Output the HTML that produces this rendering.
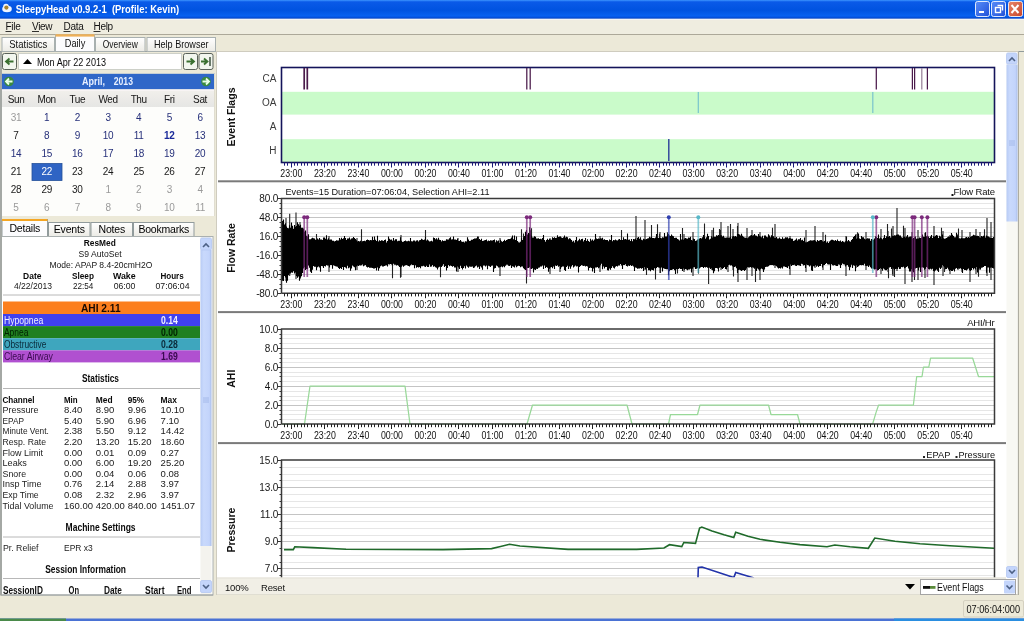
<!DOCTYPE html>
<html><head><meta charset="utf-8"><title>SleepyHead</title>
<style>html,body{margin:0;padding:0;width:1024px;height:621px;overflow:hidden;background:#ece9d8;}
svg{display:block;font-family:"Liberation Sans", sans-serif;will-change:transform;}</style></head>
<body><svg width="1024" height="621" viewBox="0 0 1024 621">
<defs>
<linearGradient id="tb" x1="0" y1="0" x2="0" y2="1"><stop offset="0" stop-color="#3d95ff"/><stop offset="0.1" stop-color="#0a5ae8"/><stop offset="0.55" stop-color="#0053e0"/><stop offset="0.85" stop-color="#0861f0"/><stop offset="1" stop-color="#0040c8"/></linearGradient>
<linearGradient id="tab" x1="0" y1="0" x2="0" y2="1"><stop offset="0" stop-color="#ffffff"/><stop offset="1" stop-color="#ecebe5"/></linearGradient>
<linearGradient id="btn" x1="0" y1="0" x2="0" y2="1"><stop offset="0" stop-color="#ffffff"/><stop offset="1" stop-color="#e3e3db"/></linearGradient>
<linearGradient id="sbv" x1="0" y1="0" x2="1" y2="0"><stop offset="0" stop-color="#b8cbf5"/><stop offset="0.3" stop-color="#c9d9fc"/><stop offset="0.8" stop-color="#c3d4fb"/><stop offset="1" stop-color="#a9bde9"/></linearGradient>
<linearGradient id="mb" x1="0" y1="0" x2="1" y2="1"><stop offset="0" stop-color="#5a8ef8"/><stop offset="1" stop-color="#1f4fd8"/></linearGradient>
<linearGradient id="cb" x1="0" y1="0" x2="1" y2="1"><stop offset="0" stop-color="#e8876a"/><stop offset="1" stop-color="#c8452a"/></linearGradient>
<linearGradient id="wk" x1="0" y1="0" x2="0" y2="1"><stop offset="0" stop-color="#f2f0ec"/><stop offset="1" stop-color="#e6e6e4"/></linearGradient>
</defs>
<rect x="0" y="0" width="1024" height="621" fill="#ece9d8" />
<rect x="0" y="0" width="1024" height="18.8" fill="url(#tb)" />
<ellipse cx="7" cy="9" rx="4.8" ry="3.3" fill="#eef4ff"/>
<circle cx="6" cy="6.5" r="2.8" fill="#eef4ff"/>
<circle cx="6.4" cy="7.6" r="2.1" fill="#a8842e"/>
<text x="15.7" y="13.36" font-size="11" font-weight="bold" fill="#ffffff" text-anchor="start" textLength="163.5" lengthAdjust="spacingAndGlyphs" xml:space="preserve">SleepyHead v0.9.2-1  (Profile: Kevin)</text>
<rect x="975.5" y="1.5" width="14" height="15" rx="2" fill="url(#mb)" stroke="#ffffff" stroke-opacity="0.85" stroke-width="1"/>
<rect x="991.5" y="1.5" width="14" height="15" rx="2" fill="url(#mb)" stroke="#ffffff" stroke-opacity="0.85" stroke-width="1"/>
<rect x="1008.5" y="1.5" width="14" height="15" rx="2" fill="url(#cb)" stroke="#ffffff" stroke-opacity="0.85" stroke-width="1"/>
<rect x="979" y="11" width="5" height="2" fill="#ffffff" />
<rect x="995.5" y="7.5" width="5" height="5" fill="none" stroke="#fff" stroke-width="1.4"/>
<path d="M997.5 5.5 H1002.5 V10.5" fill="none" stroke="#fff" stroke-width="1.4"/>
<path d="M1011.5 5 L1018.5 13 M1018.5 5 L1011.5 13" stroke="#fff" stroke-width="2"/>
<rect x="0" y="18.8" width="1024" height="1.5" fill="#f4f4f4" />
<rect x="0" y="20.3" width="1024" height="14" fill="#efede0" />
<line x1="0" y1="34.5" x2="1024" y2="34.5" stroke="#aca899" stroke-width="1" />
<text x="5.5" y="30.40" font-size="10" font-weight="normal" fill="#111" text-anchor="start" letter-spacing="-0.3" >File</text>
<text x="32" y="30.40" font-size="10" font-weight="normal" fill="#111" text-anchor="start" letter-spacing="-0.3" >View</text>
<text x="63.5" y="30.40" font-size="10" font-weight="normal" fill="#111" text-anchor="start" letter-spacing="-0.3" >Data</text>
<text x="93.5" y="30.40" font-size="10" font-weight="normal" fill="#111" text-anchor="start" letter-spacing="-0.3" >Help</text>
<line x1="5.5" y1="31.5" x2="11.5" y2="31.5" stroke="#000" stroke-width="0.8" />
<line x1="32" y1="31.5" x2="39" y2="31.5" stroke="#000" stroke-width="0.8" />
<line x1="63.5" y1="31.5" x2="70.5" y2="31.5" stroke="#000" stroke-width="0.8" />
<line x1="93.5" y1="31.5" x2="100.5" y2="31.5" stroke="#000" stroke-width="0.8" />
<line x1="0" y1="51.5" x2="1024" y2="51.5" stroke="#919b9c" stroke-width="1" />
<rect x="2" y="37.5" width="52.5" height="14" fill="url(#tab)" stroke="#a8b0b0" stroke-width="1"/>
<text x="28.25" y="48.28" font-size="10.5" font-weight="normal" fill="#111" text-anchor="middle" textLength="38" lengthAdjust="spacingAndGlyphs" >Statistics</text>
<rect x="55.5" y="34.5" width="39.0" height="17" fill="#fcfcfe" stroke="#a8b0b0" stroke-width="1"/>
<rect x="55.5" y="34.2" width="39.0" height="2.4" fill="#eeb058" />
<text x="75.0" y="47.18" font-size="10.5" font-weight="normal" fill="#111" text-anchor="middle" textLength="20.5" lengthAdjust="spacingAndGlyphs" >Daily</text>
<rect x="95.5" y="37.5" width="49.5" height="14" fill="url(#tab)" stroke="#a8b0b0" stroke-width="1"/>
<text x="120.25" y="48.28" font-size="10.5" font-weight="normal" fill="#111" text-anchor="middle" textLength="35" lengthAdjust="spacingAndGlyphs" >Overview</text>
<rect x="147" y="37.5" width="68.5" height="14" fill="url(#tab)" stroke="#a8b0b0" stroke-width="1"/>
<text x="181.25" y="48.28" font-size="10.5" font-weight="normal" fill="#111" text-anchor="middle" textLength="54.5" lengthAdjust="spacingAndGlyphs" >Help Browser</text>
<rect x="2.5" y="53.5" width="14" height="16" rx="2" fill="#f2f6ee" stroke="#5a625a" stroke-width="1"/>
<path d="M13.5 61.5 H6.5 M9.5 58.5 L6.0 61.5 L9.5 64.5" fill="none" stroke="#3a7030" stroke-width="1.8"/>
<rect x="18.5" y="53.5" width="163" height="16" fill="#ffffff" stroke="#cdd0c8" stroke-width="1"/>
<path d="M23 64 L27.5 59 L32 64 Z" fill="#000"/>
<text x="37" y="65.54" font-size="10.4" font-weight="normal" fill="#0a0a0a" text-anchor="start" textLength="69" lengthAdjust="spacingAndGlyphs" >Mon Apr 22 2013</text>
<rect x="183.5" y="53.5" width="14" height="16" rx="2" fill="#f2f6ee" stroke="#5a625a" stroke-width="1"/>
<path d="M186.5 61.5 H193.5 M190.5 58.5 L194.0 61.5 L190.5 64.5" fill="none" stroke="#3a7030" stroke-width="1.8"/>
<rect x="199.0" y="53.5" width="14" height="16" rx="2" fill="#f2f6ee" stroke="#5a625a" stroke-width="1"/>
<path d="M201.0 61.5 H207.0 M204.0 58.5 L207.5 61.5 L204.0 64.5" fill="none" stroke="#3a7030" stroke-width="1.8"/>
<rect x="209.0" y="57.0" width="2" height="9" fill="#6a7a6a" />
<rect x="2" y="73.8" width="213" height="15.7" fill="#2f67c8" />
<circle cx="9" cy="81.5" r="4.8" fill="#3a8a40"/>
<circle cx="206" cy="81.5" r="4.8" fill="#3a8a40"/>
<path d="M12.5 81.5 H6 M9 78.5 L6 81.5 L9 84.5" fill="none" stroke="#e8ffe8" stroke-width="1.8"/>
<path d="M202.5 81.5 H209 M206 78.5 L209 81.5 L206 84.5" fill="none" stroke="#e8ffe8" stroke-width="1.8"/>
<text x="82" y="85.28" font-size="10.5" font-weight="bold" fill="#e8f0ff" text-anchor="start" textLength="23" lengthAdjust="spacingAndGlyphs" >April,</text>
<text x="113.75" y="85.28" font-size="10.5" font-weight="bold" fill="#e8f0ff" text-anchor="start" textLength="19.25" lengthAdjust="spacingAndGlyphs" >2013</text>
<rect x="2" y="89.5" width="213" height="17.5" fill="url(#wk)" />
<rect x="2" y="89.5" width="213" height="1.5" fill="#f8f4f4" />
<rect x="2" y="107" width="213" height="109" fill="#fdfdfb" />
<text x="16.0" y="102.80" font-size="10" font-weight="normal" fill="#161616" text-anchor="middle" letter-spacing="-0.4" >Sun</text>
<text x="46.67" y="102.80" font-size="10" font-weight="normal" fill="#161616" text-anchor="middle" letter-spacing="-0.4" >Mon</text>
<text x="77.34" y="102.80" font-size="10" font-weight="normal" fill="#161616" text-anchor="middle" letter-spacing="-0.4" >Tue</text>
<text x="108.01" y="102.80" font-size="10" font-weight="normal" fill="#161616" text-anchor="middle" letter-spacing="-0.4" >Wed</text>
<text x="138.68" y="102.80" font-size="10" font-weight="normal" fill="#161616" text-anchor="middle" letter-spacing="-0.4" >Thu</text>
<text x="169.35000000000002" y="102.80" font-size="10" font-weight="normal" fill="#161616" text-anchor="middle" letter-spacing="-0.4" >Fri</text>
<text x="200.02" y="102.80" font-size="10" font-weight="normal" fill="#161616" text-anchor="middle" letter-spacing="-0.4" >Sat</text>
<text x="16.0" y="121.20" font-size="10" font-weight="normal" fill="#9a9a9a" text-anchor="middle" letter-spacing="-0.3" >31</text>
<text x="46.67" y="121.20" font-size="10" font-weight="normal" fill="#26307a" text-anchor="middle" letter-spacing="-0.3" >1</text>
<text x="77.34" y="121.20" font-size="10" font-weight="normal" fill="#26307a" text-anchor="middle" letter-spacing="-0.3" >2</text>
<text x="108.01" y="121.20" font-size="10" font-weight="normal" fill="#26307a" text-anchor="middle" letter-spacing="-0.3" >3</text>
<text x="138.68" y="121.20" font-size="10" font-weight="normal" fill="#26307a" text-anchor="middle" letter-spacing="-0.3" >4</text>
<text x="169.35000000000002" y="121.20" font-size="10" font-weight="normal" fill="#26307a" text-anchor="middle" letter-spacing="-0.3" >5</text>
<text x="200.02" y="121.20" font-size="10" font-weight="normal" fill="#26307a" text-anchor="middle" letter-spacing="-0.3" >6</text>
<text x="16.0" y="139.10" font-size="10" font-weight="normal" fill="#1a1a1a" text-anchor="middle" letter-spacing="-0.3" >7</text>
<text x="46.67" y="139.10" font-size="10" font-weight="normal" fill="#26307a" text-anchor="middle" letter-spacing="-0.3" >8</text>
<text x="77.34" y="139.10" font-size="10" font-weight="normal" fill="#26307a" text-anchor="middle" letter-spacing="-0.3" >9</text>
<text x="108.01" y="139.10" font-size="10" font-weight="normal" fill="#26307a" text-anchor="middle" letter-spacing="-0.3" >10</text>
<text x="138.68" y="139.10" font-size="10" font-weight="normal" fill="#26307a" text-anchor="middle" letter-spacing="-0.3" >11</text>
<text x="169.35000000000002" y="139.10" font-size="10" font-weight="bold" fill="#1a2a9a" text-anchor="middle" letter-spacing="-0.3" >12</text>
<text x="200.02" y="139.10" font-size="10" font-weight="normal" fill="#26307a" text-anchor="middle" letter-spacing="-0.3" >13</text>
<text x="16.0" y="157.00" font-size="10" font-weight="normal" fill="#26307a" text-anchor="middle" letter-spacing="-0.3" >14</text>
<text x="46.67" y="157.00" font-size="10" font-weight="normal" fill="#26307a" text-anchor="middle" letter-spacing="-0.3" >15</text>
<text x="77.34" y="157.00" font-size="10" font-weight="normal" fill="#26307a" text-anchor="middle" letter-spacing="-0.3" >16</text>
<text x="108.01" y="157.00" font-size="10" font-weight="normal" fill="#26307a" text-anchor="middle" letter-spacing="-0.3" >17</text>
<text x="138.68" y="157.00" font-size="10" font-weight="normal" fill="#26307a" text-anchor="middle" letter-spacing="-0.3" >18</text>
<text x="169.35000000000002" y="157.00" font-size="10" font-weight="normal" fill="#26307a" text-anchor="middle" letter-spacing="-0.3" >19</text>
<text x="200.02" y="157.00" font-size="10" font-weight="normal" fill="#26307a" text-anchor="middle" letter-spacing="-0.3" >20</text>
<text x="16.0" y="174.90" font-size="10" font-weight="normal" fill="#1a1a1a" text-anchor="middle" letter-spacing="-0.3" >21</text>
<rect x="32" y="163.5" width="30" height="17" fill="#2f64c4" stroke="#25509a" stroke-width="0.8" />
<text x="46.67" y="174.90" font-size="10" font-weight="normal" fill="#ffffff" text-anchor="middle" letter-spacing="-0.3" >22</text>
<text x="77.34" y="174.90" font-size="10" font-weight="normal" fill="#1a1a1a" text-anchor="middle" letter-spacing="-0.3" >23</text>
<text x="108.01" y="174.90" font-size="10" font-weight="normal" fill="#1a1a1a" text-anchor="middle" letter-spacing="-0.3" >24</text>
<text x="138.68" y="174.90" font-size="10" font-weight="normal" fill="#1a1a1a" text-anchor="middle" letter-spacing="-0.3" >25</text>
<text x="169.35000000000002" y="174.90" font-size="10" font-weight="normal" fill="#1a1a1a" text-anchor="middle" letter-spacing="-0.3" >26</text>
<text x="200.02" y="174.90" font-size="10" font-weight="normal" fill="#1a1a1a" text-anchor="middle" letter-spacing="-0.3" >27</text>
<text x="16.0" y="192.80" font-size="10" font-weight="normal" fill="#1a1a1a" text-anchor="middle" letter-spacing="-0.3" >28</text>
<text x="46.67" y="192.80" font-size="10" font-weight="normal" fill="#1a1a1a" text-anchor="middle" letter-spacing="-0.3" >29</text>
<text x="77.34" y="192.80" font-size="10" font-weight="normal" fill="#1a1a1a" text-anchor="middle" letter-spacing="-0.3" >30</text>
<text x="108.01" y="192.80" font-size="10" font-weight="normal" fill="#9a9a9a" text-anchor="middle" letter-spacing="-0.3" >1</text>
<text x="138.68" y="192.80" font-size="10" font-weight="normal" fill="#9a9a9a" text-anchor="middle" letter-spacing="-0.3" >2</text>
<text x="169.35000000000002" y="192.80" font-size="10" font-weight="normal" fill="#9a9a9a" text-anchor="middle" letter-spacing="-0.3" >3</text>
<text x="200.02" y="192.80" font-size="10" font-weight="normal" fill="#9a9a9a" text-anchor="middle" letter-spacing="-0.3" >4</text>
<text x="16.0" y="210.70" font-size="10" font-weight="normal" fill="#9a9a9a" text-anchor="middle" letter-spacing="-0.3" >5</text>
<text x="46.67" y="210.70" font-size="10" font-weight="normal" fill="#9a9a9a" text-anchor="middle" letter-spacing="-0.3" >6</text>
<text x="77.34" y="210.70" font-size="10" font-weight="normal" fill="#9a9a9a" text-anchor="middle" letter-spacing="-0.3" >7</text>
<text x="108.01" y="210.70" font-size="10" font-weight="normal" fill="#9a9a9a" text-anchor="middle" letter-spacing="-0.3" >8</text>
<text x="138.68" y="210.70" font-size="10" font-weight="normal" fill="#9a9a9a" text-anchor="middle" letter-spacing="-0.3" >9</text>
<text x="169.35000000000002" y="210.70" font-size="10" font-weight="normal" fill="#9a9a9a" text-anchor="middle" letter-spacing="-0.3" >10</text>
<text x="200.02" y="210.70" font-size="10" font-weight="normal" fill="#9a9a9a" text-anchor="middle" letter-spacing="-0.3" >11</text>
<line x1="214.5" y1="74" x2="214.5" y2="216" stroke="#e0ddd0" stroke-width="1" />
<line x1="2" y1="236.5" x2="213" y2="236.5" stroke="#919b9c" stroke-width="1" />
<rect x="2" y="219.5" width="45.5" height="17.5" fill="#fcfcfe" stroke="#919b9c" stroke-width="1"/>
<rect x="2" y="219" width="45.5" height="2" fill="#f5a623" />
<rect x="2.5" y="236" width="44.5" height="1.5" fill="#fcfcfe" />
<text x="24.75" y="232.28" font-size="10.5" font-weight="normal" fill="#000" text-anchor="middle" letter-spacing="-0.2" >Details</text>
<rect x="48.5" y="222.5" width="41.5" height="14" fill="url(#tab)" stroke="#919b9c" stroke-width="1"/>
<text x="69.25" y="233.28" font-size="10.5" font-weight="normal" fill="#000" text-anchor="middle" letter-spacing="-0.2" >Events</text>
<rect x="91" y="222.5" width="41.5" height="14" fill="url(#tab)" stroke="#919b9c" stroke-width="1"/>
<text x="111.75" y="233.28" font-size="10.5" font-weight="normal" fill="#000" text-anchor="middle" letter-spacing="-0.2" >Notes</text>
<rect x="133.5" y="222.5" width="60.5" height="14" fill="url(#tab)" stroke="#919b9c" stroke-width="1"/>
<text x="163.75" y="233.28" font-size="10.5" font-weight="normal" fill="#000" text-anchor="middle" letter-spacing="-0.2" >Bookmarks</text>
<rect x="1.5" y="236.5" width="211.5" height="358.5" fill="#ffffff" stroke="#aab0b0" stroke-width="1"/>
<rect x="200.5" y="237" width="11" height="357" fill="#f4f3ee" />
<rect x="200.5" y="250" width="11" height="296" fill="url(#sbv)" />
<line x1="203" y1="398" x2="209" y2="398" stroke="#9db3e6" stroke-width="0.8" />
<line x1="203" y1="400" x2="209" y2="400" stroke="#9db3e6" stroke-width="0.8" />
<line x1="203" y1="402" x2="209" y2="402" stroke="#9db3e6" stroke-width="0.8" />
<rect x="200.5" y="238" width="11" height="12" rx="1.5" fill="#c4d5fb" stroke="#b5c8f2" stroke-width="0.8"/>
<rect x="200.5" y="580.5" width="11" height="12" rx="1.5" fill="#c4d5fb" stroke="#b5c8f2" stroke-width="0.8"/>
<path d="M203 247 L206 244 L209 247" fill="none" stroke="#4d6185" stroke-width="1.6"/>
<path d="M203 585 L206 588 L209 585" fill="none" stroke="#4d6185" stroke-width="1.6"/>
<text x="83.8" y="246.46" font-size="9.6" font-weight="bold" fill="#0a0a0a" text-anchor="start" textLength="32" lengthAdjust="spacingAndGlyphs" >ResMed</text>
<text x="78.6" y="257.18" font-size="9.4" font-weight="normal" fill="#161616" text-anchor="start" textLength="43" lengthAdjust="spacingAndGlyphs" >S9 AutoSet</text>
<text x="49.4" y="267.98" font-size="9.4" font-weight="normal" fill="#161616" text-anchor="start" textLength="103" lengthAdjust="spacingAndGlyphs" >Mode: APAP 8.4-20cmH2O</text>
<text x="23.1" y="278.66" font-size="9.6" font-weight="bold" fill="#0a0a0a" text-anchor="start" textLength="18.3" lengthAdjust="spacingAndGlyphs" >Date</text>
<text x="14" y="288.88" font-size="9.4" font-weight="normal" fill="#161616" text-anchor="start" textLength="38" lengthAdjust="spacingAndGlyphs" >4/22/2013</text>
<text x="72" y="278.66" font-size="9.6" font-weight="bold" fill="#0a0a0a" text-anchor="start" textLength="22" lengthAdjust="spacingAndGlyphs" >Sleep</text>
<text x="73" y="288.88" font-size="9.4" font-weight="normal" fill="#161616" text-anchor="start" textLength="20.4" lengthAdjust="spacingAndGlyphs" >22:54</text>
<text x="112.9" y="278.66" font-size="9.6" font-weight="bold" fill="#0a0a0a" text-anchor="start" textLength="22.8" lengthAdjust="spacingAndGlyphs" >Wake</text>
<text x="113.7" y="288.88" font-size="9.4" font-weight="normal" fill="#161616" text-anchor="start" textLength="21.7" lengthAdjust="spacingAndGlyphs" >06:00</text>
<text x="160.4" y="278.66" font-size="9.6" font-weight="bold" fill="#0a0a0a" text-anchor="start" textLength="23.3" lengthAdjust="spacingAndGlyphs" >Hours</text>
<text x="155.5" y="288.88" font-size="9.4" font-weight="normal" fill="#161616" text-anchor="start" textLength="34" lengthAdjust="spacingAndGlyphs" >07:06:04</text>
<line x1="3" y1="295" x2="200" y2="295" stroke="#b8b8b8" stroke-width="1" />
<rect x="3" y="301.5" width="197" height="12.5" fill="#fc7f1e" />
<text x="81" y="311.66" font-size="11" font-weight="bold" fill="#1a0a00" text-anchor="start" textLength="39.6" lengthAdjust="spacingAndGlyphs" >AHI 2.11</text>
<rect x="3" y="314" width="197" height="12.1" fill="#4040ee" />
<text x="3.9" y="323.60" font-size="10" font-weight="normal" fill="#f0f0ff" text-anchor="start" textLength="39.4" lengthAdjust="spacingAndGlyphs" >Hypopnea</text>
<text x="161" y="323.60" font-size="10" font-weight="bold" fill="#f0f0ff" text-anchor="start" textLength="16.8" lengthAdjust="spacingAndGlyphs" >0.14</text>
<rect x="3" y="326.1" width="197" height="12.1" fill="#208020" />
<text x="3.9" y="335.70" font-size="10" font-weight="normal" fill="#002000" text-anchor="start" textLength="24.5" lengthAdjust="spacingAndGlyphs" >Apnea</text>
<text x="161" y="335.70" font-size="10" font-weight="bold" fill="#002000" text-anchor="start" textLength="16.8" lengthAdjust="spacingAndGlyphs" >0.00</text>
<rect x="3" y="338.20000000000005" width="197" height="12.1" fill="#3ea6be" />
<text x="3.9" y="347.80" font-size="10" font-weight="normal" fill="#0a2a3a" text-anchor="start" textLength="42.5" lengthAdjust="spacingAndGlyphs" >Obstructive</text>
<text x="161" y="347.80" font-size="10" font-weight="bold" fill="#0a2a3a" text-anchor="start" textLength="16.8" lengthAdjust="spacingAndGlyphs" >0.28</text>
<rect x="3" y="350.30000000000007" width="197" height="12.1" fill="#b050d0" />
<text x="3.9" y="359.90" font-size="10" font-weight="normal" fill="#3a0a50" text-anchor="start" textLength="49" lengthAdjust="spacingAndGlyphs" >Clear Airway</text>
<text x="161" y="359.90" font-size="10" font-weight="bold" fill="#3a0a50" text-anchor="start" textLength="16.8" lengthAdjust="spacingAndGlyphs" >1.69</text>
<text x="82" y="382.20" font-size="10" font-weight="bold" fill="#0a0a0a" text-anchor="start" textLength="37" lengthAdjust="spacingAndGlyphs" >Statistics</text>
<line x1="3" y1="388.5" x2="200" y2="388.5" stroke="#b8b8b8" stroke-width="1" />
<text x="2.5" y="402.72" font-size="9.5" font-weight="bold" fill="#0a0a0a" text-anchor="start" textLength="32" lengthAdjust="spacingAndGlyphs" >Channel</text>
<text x="63.9" y="402.72" font-size="9.5" font-weight="bold" fill="#0a0a0a" text-anchor="start" textLength="13.6" lengthAdjust="spacingAndGlyphs" >Min</text>
<text x="95.8" y="402.72" font-size="9.5" font-weight="bold" fill="#0a0a0a" text-anchor="start" textLength="16.8" lengthAdjust="spacingAndGlyphs" >Med</text>
<text x="127.7" y="402.72" font-size="9.5" font-weight="bold" fill="#0a0a0a" text-anchor="start" textLength="16.4" lengthAdjust="spacingAndGlyphs" >95%</text>
<text x="160.6" y="402.72" font-size="9.5" font-weight="bold" fill="#0a0a0a" text-anchor="start" textLength="16.4" lengthAdjust="spacingAndGlyphs" >Max</text>
<text x="2.5" y="413.31" font-size="9.5" font-weight="normal" fill="#1c1c1c" text-anchor="start" textLength="36" lengthAdjust="spacingAndGlyphs" >Pressure</text>
<text x="63.9" y="413.31" font-size="9.5" font-weight="normal" fill="#202020" text-anchor="start" >8.40</text>
<text x="95.8" y="413.31" font-size="9.5" font-weight="normal" fill="#202020" text-anchor="start" >8.90</text>
<text x="127.7" y="413.31" font-size="9.5" font-weight="normal" fill="#202020" text-anchor="start" >9.96</text>
<text x="160.6" y="413.31" font-size="9.5" font-weight="normal" fill="#202020" text-anchor="start" >10.10</text>
<text x="2.5" y="423.90" font-size="9.5" font-weight="normal" fill="#1c1c1c" text-anchor="start" textLength="21.5" lengthAdjust="spacingAndGlyphs" >EPAP</text>
<text x="63.9" y="423.90" font-size="9.5" font-weight="normal" fill="#202020" text-anchor="start" >5.40</text>
<text x="95.8" y="423.90" font-size="9.5" font-weight="normal" fill="#202020" text-anchor="start" >5.90</text>
<text x="127.7" y="423.90" font-size="9.5" font-weight="normal" fill="#202020" text-anchor="start" >6.96</text>
<text x="160.6" y="423.90" font-size="9.5" font-weight="normal" fill="#202020" text-anchor="start" >7.10</text>
<text x="2.5" y="434.49" font-size="9.5" font-weight="normal" fill="#1c1c1c" text-anchor="start" textLength="46.4" lengthAdjust="spacingAndGlyphs" >Minute Vent.</text>
<text x="63.9" y="434.49" font-size="9.5" font-weight="normal" fill="#202020" text-anchor="start" >2.38</text>
<text x="95.8" y="434.49" font-size="9.5" font-weight="normal" fill="#202020" text-anchor="start" >5.50</text>
<text x="127.7" y="434.49" font-size="9.5" font-weight="normal" fill="#202020" text-anchor="start" >9.12</text>
<text x="160.6" y="434.49" font-size="9.5" font-weight="normal" fill="#202020" text-anchor="start" >14.42</text>
<text x="2.5" y="445.08" font-size="9.5" font-weight="normal" fill="#1c1c1c" text-anchor="start" textLength="43.5" lengthAdjust="spacingAndGlyphs" >Resp. Rate</text>
<text x="63.9" y="445.08" font-size="9.5" font-weight="normal" fill="#202020" text-anchor="start" >2.20</text>
<text x="95.8" y="445.08" font-size="9.5" font-weight="normal" fill="#202020" text-anchor="start" >13.20</text>
<text x="127.7" y="445.08" font-size="9.5" font-weight="normal" fill="#202020" text-anchor="start" >15.20</text>
<text x="160.6" y="445.08" font-size="9.5" font-weight="normal" fill="#202020" text-anchor="start" >18.60</text>
<text x="2.5" y="455.67" font-size="9.5" font-weight="normal" fill="#1c1c1c" text-anchor="start" textLength="40.4" lengthAdjust="spacingAndGlyphs" >Flow Limit</text>
<text x="63.9" y="455.67" font-size="9.5" font-weight="normal" fill="#202020" text-anchor="start" >0.00</text>
<text x="95.8" y="455.67" font-size="9.5" font-weight="normal" fill="#202020" text-anchor="start" >0.01</text>
<text x="127.7" y="455.67" font-size="9.5" font-weight="normal" fill="#202020" text-anchor="start" >0.09</text>
<text x="160.6" y="455.67" font-size="9.5" font-weight="normal" fill="#202020" text-anchor="start" >0.27</text>
<text x="2.5" y="466.26" font-size="9.5" font-weight="normal" fill="#1c1c1c" text-anchor="start" textLength="24.3" lengthAdjust="spacingAndGlyphs" >Leaks</text>
<text x="63.9" y="466.26" font-size="9.5" font-weight="normal" fill="#202020" text-anchor="start" >0.00</text>
<text x="95.8" y="466.26" font-size="9.5" font-weight="normal" fill="#202020" text-anchor="start" >6.00</text>
<text x="127.7" y="466.26" font-size="9.5" font-weight="normal" fill="#202020" text-anchor="start" >19.20</text>
<text x="160.6" y="466.26" font-size="9.5" font-weight="normal" fill="#202020" text-anchor="start" >25.20</text>
<text x="2.5" y="476.85" font-size="9.5" font-weight="normal" fill="#1c1c1c" text-anchor="start" textLength="23.6" lengthAdjust="spacingAndGlyphs" >Snore</text>
<text x="63.9" y="476.85" font-size="9.5" font-weight="normal" fill="#202020" text-anchor="start" >0.00</text>
<text x="95.8" y="476.85" font-size="9.5" font-weight="normal" fill="#202020" text-anchor="start" >0.04</text>
<text x="127.7" y="476.85" font-size="9.5" font-weight="normal" fill="#202020" text-anchor="start" >0.06</text>
<text x="160.6" y="476.85" font-size="9.5" font-weight="normal" fill="#202020" text-anchor="start" >0.08</text>
<text x="2.5" y="487.44" font-size="9.5" font-weight="normal" fill="#1c1c1c" text-anchor="start" textLength="39" lengthAdjust="spacingAndGlyphs" >Insp Time</text>
<text x="63.9" y="487.44" font-size="9.5" font-weight="normal" fill="#202020" text-anchor="start" >0.76</text>
<text x="95.8" y="487.44" font-size="9.5" font-weight="normal" fill="#202020" text-anchor="start" >2.14</text>
<text x="127.7" y="487.44" font-size="9.5" font-weight="normal" fill="#202020" text-anchor="start" >2.88</text>
<text x="160.6" y="487.44" font-size="9.5" font-weight="normal" fill="#202020" text-anchor="start" >3.97</text>
<text x="2.5" y="498.03" font-size="9.5" font-weight="normal" fill="#1c1c1c" text-anchor="start" textLength="36.2" lengthAdjust="spacingAndGlyphs" >Exp Time</text>
<text x="63.9" y="498.03" font-size="9.5" font-weight="normal" fill="#202020" text-anchor="start" >0.08</text>
<text x="95.8" y="498.03" font-size="9.5" font-weight="normal" fill="#202020" text-anchor="start" >2.32</text>
<text x="127.7" y="498.03" font-size="9.5" font-weight="normal" fill="#202020" text-anchor="start" >2.96</text>
<text x="160.6" y="498.03" font-size="9.5" font-weight="normal" fill="#202020" text-anchor="start" >3.97</text>
<text x="2.5" y="508.62" font-size="9.5" font-weight="normal" fill="#1c1c1c" text-anchor="start" textLength="51" lengthAdjust="spacingAndGlyphs" >Tidal Volume</text>
<text x="63.9" y="508.62" font-size="9.5" font-weight="normal" fill="#202020" text-anchor="start" >160.00</text>
<text x="95.8" y="508.62" font-size="9.5" font-weight="normal" fill="#202020" text-anchor="start" >420.00</text>
<text x="127.7" y="508.62" font-size="9.5" font-weight="normal" fill="#202020" text-anchor="start" >840.00</text>
<text x="160.6" y="508.62" font-size="9.5" font-weight="normal" fill="#202020" text-anchor="start" >1451.07</text>
<text x="65.6" y="530.50" font-size="10" font-weight="bold" fill="#0a0a0a" text-anchor="start" textLength="70" lengthAdjust="spacingAndGlyphs" >Machine Settings</text>
<line x1="3" y1="537" x2="200" y2="537" stroke="#b8b8b8" stroke-width="1" />
<text x="2.9" y="551.42" font-size="9.5" font-weight="normal" fill="#1c1c1c" text-anchor="start" textLength="35.6" lengthAdjust="spacingAndGlyphs" >Pr. Relief</text>
<text x="64" y="551.42" font-size="9.5" font-weight="normal" fill="#1c1c1c" text-anchor="start" textLength="28.7" lengthAdjust="spacingAndGlyphs" >EPR x3</text>
<text x="45.2" y="572.60" font-size="10" font-weight="bold" fill="#0a0a0a" text-anchor="start" textLength="80.8" lengthAdjust="spacingAndGlyphs" >Session Information</text>
<line x1="3" y1="578.5" x2="200" y2="578.5" stroke="#b8b8b8" stroke-width="1" />
<text x="2.9" y="593.80" font-size="10" font-weight="bold" fill="#111" text-anchor="start" textLength="40" lengthAdjust="spacingAndGlyphs" >SessionID</text>
<text x="68.5" y="593.80" font-size="10" font-weight="bold" fill="#111" text-anchor="start" textLength="10.5" lengthAdjust="spacingAndGlyphs" >On</text>
<text x="104" y="593.80" font-size="10" font-weight="bold" fill="#111" text-anchor="start" textLength="18" lengthAdjust="spacingAndGlyphs" >Date</text>
<text x="145" y="593.80" font-size="10" font-weight="bold" fill="#111" text-anchor="start" textLength="19.5" lengthAdjust="spacingAndGlyphs" >Start</text>
<text x="177" y="593.80" font-size="10" font-weight="bold" fill="#111" text-anchor="start" textLength="14.5" lengthAdjust="spacingAndGlyphs" >End</text>
<line x1="1.5" y1="595" x2="213" y2="595" stroke="#9aa0a0" stroke-width="1" />
<rect x="0" y="52" width="2" height="543.5" fill="#a4a8a4" />
<rect x="216.5" y="51.5" width="801.5" height="543" fill="#ffffff" stroke="#cfccbf" stroke-width="1"/>
<rect x="1006.5" y="52.5" width="11" height="524" fill="#f8f8f3" />
<rect x="1006.5" y="64.5" width="11" height="157" fill="url(#sbv)" />
<line x1="1009" y1="141" x2="1015" y2="141" stroke="#9db3e6" stroke-width="0.8" />
<line x1="1009" y1="143" x2="1015" y2="143" stroke="#9db3e6" stroke-width="0.8" />
<line x1="1009" y1="145" x2="1015" y2="145" stroke="#9db3e6" stroke-width="0.8" />
<rect x="1006.5" y="53" width="10.5" height="11" rx="1.5" fill="#c4d5fb" stroke="#b5c8f2" stroke-width="0.8"/>
<rect x="1006.5" y="566.5" width="10.5" height="11" rx="1.5" fill="#c4d5fb" stroke="#b5c8f2" stroke-width="0.8"/>
<path d="M1009 61 L1012 58 L1015 61" fill="none" stroke="#4d6185" stroke-width="1.6"/>
<path d="M1009 570 L1012 573 L1015 570" fill="none" stroke="#4d6185" stroke-width="1.6"/>
<rect x="281.5" y="67.5" width="713.0" height="95" fill="#ffffff" />
<rect x="281.5" y="91.8" width="713.0" height="22.8" fill="#cafbca" />
<rect x="281.5" y="139.2" width="713.0" height="23.3" fill="#cafbca" />
<rect x="281.5" y="67.5" width="713.0" height="95" fill="none" stroke="#14145a" stroke-width="1.6"/>
<text x="276.5" y="81.60" font-size="10" font-weight="normal" fill="#3a3a3a" text-anchor="end" >CA</text>
<text x="276.5" y="105.60" font-size="10" font-weight="normal" fill="#3a3a3a" text-anchor="end" >OA</text>
<text x="276.5" y="129.60" font-size="10" font-weight="normal" fill="#3a3a3a" text-anchor="end" >A</text>
<text x="276.5" y="153.60" font-size="10" font-weight="normal" fill="#3a3a3a" text-anchor="end" >H</text>
<text x="231.5" y="117" font-size="10.5" font-weight="bold" fill="#111" text-anchor="middle" transform="rotate(-90 231.5 117)" dy="3.8">Event Flags</text>
<line x1="304.2" y1="68" x2="304.2" y2="89.5" stroke="#4a1a4a" stroke-width="1.7" />
<line x1="307.3" y1="68" x2="307.3" y2="89.5" stroke="#4a1a4a" stroke-width="1.7" />
<line x1="526.8" y1="68" x2="526.8" y2="89.5" stroke="#4a1a4a" stroke-width="1.25" />
<line x1="530.2" y1="68" x2="530.2" y2="89.5" stroke="#4a1a4a" stroke-width="1.25" />
<line x1="876.3" y1="68" x2="876.3" y2="89.5" stroke="#4a1a4a" stroke-width="1.25" />
<line x1="912.4" y1="68" x2="912.4" y2="89.5" stroke="#4a1a4a" stroke-width="1.25" />
<line x1="914.6" y1="68" x2="914.6" y2="89.5" stroke="#4a1a4a" stroke-width="1.25" />
<line x1="921.8" y1="68" x2="921.8" y2="89.5" stroke="#9a829a" stroke-width="1.25" />
<line x1="927.4" y1="68" x2="927.4" y2="89.5" stroke="#4a1a4a" stroke-width="1.25" />
<line x1="698.3" y1="92" x2="698.3" y2="113" stroke="#78c4cc" stroke-width="1.2" />
<line x1="872.8" y1="92" x2="872.8" y2="113" stroke="#78c4cc" stroke-width="1.2" />
<line x1="668.8" y1="139" x2="668.8" y2="161" stroke="#2b3d9a" stroke-width="1.4" />
<path d="M284.5 162.5 v3.2 M287.5 162.5 v3.2 M291.5 162.5 v5 M294.5 162.5 v3.2 M297.5 162.5 v3.2 M301.5 162.5 v3.2 M304.5 162.5 v3.2 M307.5 162.5 v3.2 M311.5 162.5 v3.2 M314.5 162.5 v3.2 M317.5 162.5 v3.2 M321.5 162.5 v3.2 M324.5 162.5 v5 M327.5 162.5 v3.2 M331.5 162.5 v3.2 M334.5 162.5 v3.2 M337.5 162.5 v3.2 M341.5 162.5 v3.2 M344.5 162.5 v3.2 M348.5 162.5 v3.2 M351.5 162.5 v3.2 M354.5 162.5 v3.2 M358.5 162.5 v5 M361.5 162.5 v3.2 M364.5 162.5 v3.2 M368.5 162.5 v3.2 M371.5 162.5 v3.2 M374.5 162.5 v3.2 M378.5 162.5 v3.2 M381.5 162.5 v3.2 M384.5 162.5 v3.2 M388.5 162.5 v3.2 M391.5 162.5 v5 M394.5 162.5 v3.2 M398.5 162.5 v3.2 M401.5 162.5 v3.2 M405.5 162.5 v3.2 M408.5 162.5 v3.2 M411.5 162.5 v3.2 M415.5 162.5 v3.2 M418.5 162.5 v3.2 M421.5 162.5 v3.2 M425.5 162.5 v5 M428.5 162.5 v3.2 M431.5 162.5 v3.2 M435.5 162.5 v3.2 M438.5 162.5 v3.2 M441.5 162.5 v3.2 M445.5 162.5 v3.2 M448.5 162.5 v3.2 M451.5 162.5 v3.2 M455.5 162.5 v3.2 M458.5 162.5 v5 M462.5 162.5 v3.2 M465.5 162.5 v3.2 M468.5 162.5 v3.2 M472.5 162.5 v3.2 M475.5 162.5 v3.2 M478.5 162.5 v3.2 M482.5 162.5 v3.2 M485.5 162.5 v3.2 M488.5 162.5 v3.2 M492.5 162.5 v5 M495.5 162.5 v3.2 M498.5 162.5 v3.2 M502.5 162.5 v3.2 M505.5 162.5 v3.2 M508.5 162.5 v3.2 M512.5 162.5 v3.2 M515.5 162.5 v3.2 M519.5 162.5 v3.2 M522.5 162.5 v3.2 M525.5 162.5 v5 M529.5 162.5 v3.2 M532.5 162.5 v3.2 M535.5 162.5 v3.2 M539.5 162.5 v3.2 M542.5 162.5 v3.2 M545.5 162.5 v3.2 M549.5 162.5 v3.2 M552.5 162.5 v3.2 M555.5 162.5 v3.2 M559.5 162.5 v5 M562.5 162.5 v3.2 M565.5 162.5 v3.2 M569.5 162.5 v3.2 M572.5 162.5 v3.2 M575.5 162.5 v3.2 M579.5 162.5 v3.2 M582.5 162.5 v3.2 M586.5 162.5 v3.2 M589.5 162.5 v3.2 M592.5 162.5 v5 M596.5 162.5 v3.2 M599.5 162.5 v3.2 M602.5 162.5 v3.2 M606.5 162.5 v3.2 M609.5 162.5 v3.2 M612.5 162.5 v3.2 M616.5 162.5 v3.2 M619.5 162.5 v3.2 M622.5 162.5 v3.2 M626.5 162.5 v5 M629.5 162.5 v3.2 M632.5 162.5 v3.2 M636.5 162.5 v3.2 M639.5 162.5 v3.2 M643.5 162.5 v3.2 M646.5 162.5 v3.2 M649.5 162.5 v3.2 M653.5 162.5 v3.2 M656.5 162.5 v3.2 M659.5 162.5 v5 M663.5 162.5 v3.2 M666.5 162.5 v3.2 M669.5 162.5 v3.2 M673.5 162.5 v3.2 M676.5 162.5 v3.2 M679.5 162.5 v3.2 M683.5 162.5 v3.2 M686.5 162.5 v3.2 M689.5 162.5 v3.2 M693.5 162.5 v5 M696.5 162.5 v3.2 M700.5 162.5 v3.2 M703.5 162.5 v3.2 M706.5 162.5 v3.2 M710.5 162.5 v3.2 M713.5 162.5 v3.2 M716.5 162.5 v3.2 M720.5 162.5 v3.2 M723.5 162.5 v3.2 M726.5 162.5 v5 M730.5 162.5 v3.2 M733.5 162.5 v3.2 M736.5 162.5 v3.2 M740.5 162.5 v3.2 M743.5 162.5 v3.2 M746.5 162.5 v3.2 M750.5 162.5 v3.2 M753.5 162.5 v3.2 M757.5 162.5 v3.2 M760.5 162.5 v5 M763.5 162.5 v3.2 M767.5 162.5 v3.2 M770.5 162.5 v3.2 M773.5 162.5 v3.2 M777.5 162.5 v3.2 M780.5 162.5 v3.2 M783.5 162.5 v3.2 M787.5 162.5 v3.2 M790.5 162.5 v3.2 M793.5 162.5 v5 M797.5 162.5 v3.2 M800.5 162.5 v3.2 M803.5 162.5 v3.2 M807.5 162.5 v3.2 M810.5 162.5 v3.2 M813.5 162.5 v3.2 M817.5 162.5 v3.2 M820.5 162.5 v3.2 M824.5 162.5 v3.2 M827.5 162.5 v5 M830.5 162.5 v3.2 M834.5 162.5 v3.2 M837.5 162.5 v3.2 M840.5 162.5 v3.2 M844.5 162.5 v3.2 M847.5 162.5 v3.2 M850.5 162.5 v3.2 M854.5 162.5 v3.2 M857.5 162.5 v3.2 M860.5 162.5 v5 M864.5 162.5 v3.2 M867.5 162.5 v3.2 M870.5 162.5 v3.2 M874.5 162.5 v3.2 M877.5 162.5 v3.2 M881.5 162.5 v3.2 M884.5 162.5 v3.2 M887.5 162.5 v3.2 M891.5 162.5 v3.2 M894.5 162.5 v5 M897.5 162.5 v3.2 M901.5 162.5 v3.2 M904.5 162.5 v3.2 M907.5 162.5 v3.2 M911.5 162.5 v3.2 M914.5 162.5 v3.2 M917.5 162.5 v3.2 M921.5 162.5 v3.2 M924.5 162.5 v3.2 M927.5 162.5 v5 M931.5 162.5 v3.2 M934.5 162.5 v3.2 M938.5 162.5 v3.2 M941.5 162.5 v3.2 M944.5 162.5 v3.2 M948.5 162.5 v3.2 M951.5 162.5 v3.2 M954.5 162.5 v3.2 M958.5 162.5 v3.2 M961.5 162.5 v5 M964.5 162.5 v3.2 M968.5 162.5 v3.2 M971.5 162.5 v3.2 M974.5 162.5 v3.2 M978.5 162.5 v3.2 M981.5 162.5 v3.2 M984.5 162.5 v3.2 M988.5 162.5 v3.2 M991.5 162.5 v3.2" stroke="#1a1a7a" stroke-width="1"/>
<text x="291.35633802816903" y="177.40" font-size="10" font-weight="normal" fill="#111" text-anchor="middle" textLength="22" lengthAdjust="spacingAndGlyphs" >23:00</text>
<text x="324.8774647887324" y="177.40" font-size="10" font-weight="normal" fill="#111" text-anchor="middle" textLength="22" lengthAdjust="spacingAndGlyphs" >23:20</text>
<text x="358.39859154929576" y="177.40" font-size="10" font-weight="normal" fill="#111" text-anchor="middle" textLength="22" lengthAdjust="spacingAndGlyphs" >23:40</text>
<text x="391.91971830985915" y="177.40" font-size="10" font-weight="normal" fill="#111" text-anchor="middle" textLength="22" lengthAdjust="spacingAndGlyphs" >00:00</text>
<text x="425.44084507042254" y="177.40" font-size="10" font-weight="normal" fill="#111" text-anchor="middle" textLength="22" lengthAdjust="spacingAndGlyphs" >00:20</text>
<text x="458.96197183098593" y="177.40" font-size="10" font-weight="normal" fill="#111" text-anchor="middle" textLength="22" lengthAdjust="spacingAndGlyphs" >00:40</text>
<text x="492.4830985915493" y="177.40" font-size="10" font-weight="normal" fill="#111" text-anchor="middle" textLength="22" lengthAdjust="spacingAndGlyphs" >01:00</text>
<text x="526.0042253521126" y="177.40" font-size="10" font-weight="normal" fill="#111" text-anchor="middle" textLength="22" lengthAdjust="spacingAndGlyphs" >01:20</text>
<text x="559.525352112676" y="177.40" font-size="10" font-weight="normal" fill="#111" text-anchor="middle" textLength="22" lengthAdjust="spacingAndGlyphs" >01:40</text>
<text x="593.0464788732394" y="177.40" font-size="10" font-weight="normal" fill="#111" text-anchor="middle" textLength="22" lengthAdjust="spacingAndGlyphs" >02:00</text>
<text x="626.5676056338027" y="177.40" font-size="10" font-weight="normal" fill="#111" text-anchor="middle" textLength="22" lengthAdjust="spacingAndGlyphs" >02:20</text>
<text x="660.0887323943662" y="177.40" font-size="10" font-weight="normal" fill="#111" text-anchor="middle" textLength="22" lengthAdjust="spacingAndGlyphs" >02:40</text>
<text x="693.6098591549296" y="177.40" font-size="10" font-weight="normal" fill="#111" text-anchor="middle" textLength="22" lengthAdjust="spacingAndGlyphs" >03:00</text>
<text x="727.1309859154928" y="177.40" font-size="10" font-weight="normal" fill="#111" text-anchor="middle" textLength="22" lengthAdjust="spacingAndGlyphs" >03:20</text>
<text x="760.6521126760563" y="177.40" font-size="10" font-weight="normal" fill="#111" text-anchor="middle" textLength="22" lengthAdjust="spacingAndGlyphs" >03:40</text>
<text x="794.1732394366197" y="177.40" font-size="10" font-weight="normal" fill="#111" text-anchor="middle" textLength="22" lengthAdjust="spacingAndGlyphs" >04:00</text>
<text x="827.6943661971831" y="177.40" font-size="10" font-weight="normal" fill="#111" text-anchor="middle" textLength="22" lengthAdjust="spacingAndGlyphs" >04:20</text>
<text x="861.2154929577464" y="177.40" font-size="10" font-weight="normal" fill="#111" text-anchor="middle" textLength="22" lengthAdjust="spacingAndGlyphs" >04:40</text>
<text x="894.7366197183098" y="177.40" font-size="10" font-weight="normal" fill="#111" text-anchor="middle" textLength="22" lengthAdjust="spacingAndGlyphs" >05:00</text>
<text x="928.2577464788732" y="177.40" font-size="10" font-weight="normal" fill="#111" text-anchor="middle" textLength="22" lengthAdjust="spacingAndGlyphs" >05:20</text>
<text x="961.7788732394366" y="177.40" font-size="10" font-weight="normal" fill="#111" text-anchor="middle" textLength="22" lengthAdjust="spacingAndGlyphs" >05:40</text>
<rect x="218" y="180.29999999999998" width="788" height="2" fill="#7a7a7a" />
<text x="285.5" y="195.22" font-size="9.5" font-weight="normal" fill="#111" text-anchor="start" textLength="204" lengthAdjust="spacingAndGlyphs" >Events=15 Duration=07:06:04, Selection AHI=2.11</text>
<text x="995" y="195.42" font-size="9.5" font-weight="normal" fill="#111" text-anchor="end" letter-spacing="-0.15" >Flow Rate</text>
<rect x="951.5" y="194" width="2" height="2" fill="#111" />
<line x1="281.5" y1="203.5" x2="994.5" y2="203.5" stroke="#e6e6e6" stroke-width="1" />
<line x1="281.5" y1="208.5" x2="994.5" y2="208.5" stroke="#e6e6e6" stroke-width="1" />
<line x1="281.5" y1="213.5" x2="994.5" y2="213.5" stroke="#e6e6e6" stroke-width="1" />
<line x1="281.5" y1="217.5" x2="994.5" y2="217.5" stroke="#c4c4c4" stroke-width="1" />
<line x1="281.5" y1="222.5" x2="994.5" y2="222.5" stroke="#e6e6e6" stroke-width="1" />
<line x1="281.5" y1="227.5" x2="994.5" y2="227.5" stroke="#e6e6e6" stroke-width="1" />
<line x1="281.5" y1="232.5" x2="994.5" y2="232.5" stroke="#e6e6e6" stroke-width="1" />
<line x1="281.5" y1="236.5" x2="994.5" y2="236.5" stroke="#c4c4c4" stroke-width="1" />
<line x1="281.5" y1="241.5" x2="994.5" y2="241.5" stroke="#e6e6e6" stroke-width="1" />
<line x1="281.5" y1="246.5" x2="994.5" y2="246.5" stroke="#e6e6e6" stroke-width="1" />
<line x1="281.5" y1="251.5" x2="994.5" y2="251.5" stroke="#e6e6e6" stroke-width="1" />
<line x1="281.5" y1="255.5" x2="994.5" y2="255.5" stroke="#c4c4c4" stroke-width="1" />
<line x1="281.5" y1="260.5" x2="994.5" y2="260.5" stroke="#e6e6e6" stroke-width="1" />
<line x1="281.5" y1="265.5" x2="994.5" y2="265.5" stroke="#e6e6e6" stroke-width="1" />
<line x1="281.5" y1="270.5" x2="994.5" y2="270.5" stroke="#e6e6e6" stroke-width="1" />
<line x1="281.5" y1="274.5" x2="994.5" y2="274.5" stroke="#c4c4c4" stroke-width="1" />
<line x1="281.5" y1="279.5" x2="994.5" y2="279.5" stroke="#e6e6e6" stroke-width="1" />
<line x1="281.5" y1="284.5" x2="994.5" y2="284.5" stroke="#e6e6e6" stroke-width="1" />
<line x1="281.5" y1="288.5" x2="994.5" y2="288.5" stroke="#e6e6e6" stroke-width="1" />
<path d="M278.0 198.5 H281.5 M279.5 203.5 H281.5 M279.5 208.5 H281.5 M279.5 213.5 H281.5 M278.0 217.5 H281.5 M279.5 222.5 H281.5 M279.5 227.5 H281.5 M279.5 232.5 H281.5 M278.0 236.5 H281.5 M279.5 241.5 H281.5 M279.5 246.5 H281.5 M279.5 251.5 H281.5 M278.0 255.5 H281.5 M279.5 260.5 H281.5 M279.5 265.5 H281.5 M279.5 270.5 H281.5 M278.0 274.5 H281.5 M279.5 279.5 H281.5 M279.5 284.5 H281.5 M279.5 288.5 H281.5 M278.0 293.5 H281.5" stroke="#333" stroke-width="1"/>
<text x="278.2" y="202.10" font-size="10" font-weight="normal" fill="#161616" text-anchor="end" letter-spacing="-0.15" >80.0</text>
<text x="278.2" y="221.04" font-size="10" font-weight="normal" fill="#161616" text-anchor="end" letter-spacing="-0.15" >48.0</text>
<text x="278.2" y="239.98" font-size="10" font-weight="normal" fill="#161616" text-anchor="end" letter-spacing="-0.15" >16.0</text>
<text x="278.2" y="258.92" font-size="10" font-weight="normal" fill="#161616" text-anchor="end" letter-spacing="-0.15" >-16.0</text>
<text x="278.2" y="277.86" font-size="10" font-weight="normal" fill="#161616" text-anchor="end" letter-spacing="-0.15" >-48.0</text>
<text x="278.2" y="296.80" font-size="10" font-weight="normal" fill="#161616" text-anchor="end" letter-spacing="-0.15" >-80.0</text>
<text x="231.5" y="248" font-size="10.5" font-weight="bold" fill="#111" text-anchor="middle" transform="rotate(-90 231.5 248)" dy="3.8">Flow Rate</text>
<path d="M289.7 213.7V276M296 212.5V279M286 218V281M300 222V279M401 235V277M500 238V276M550 238V274M636 216V268M645 220V270M708.6 240V284M721 222V270M738 223V282M760 232V280M790 236V275M806 230V272M823 232V270M846 236V276M897 208V271M905 228V284M934 226V285M950 235V274M970 232V282M987 218V276M991 222V280M329 236V272M357 238V270M458 238V272M560 236V272M600 236V272M660 232V273M684 234V272M693 232V276M747 228V280M775 224V268M815 226V268M856 234V268M866 232V270M712 230V270M728 226V272M733 229V270M752 230V276M881 229V274M888 231V272M893 226V276M912 232V282M918 230V280M925 233V278M943 231V276M958 234V270M962 230V272M976 229V274M980 232V270M521.5 229.27129007761516V245.2M523.5 233.60262408758976V243.6M526.5 264.0V283.6123355923812M529.5 227.18780607212474V242.0M530.5 230.33862684968264V242.0M531.5 228.15415771677678V242.0M646.5 261.6V275.00439785410344M651.5 224.96700879085398V243.98M655.5 262.05V279.6136194454432M657.5 224.25516161746862V243.86M659.5 233.70849060147623V243.82M660.5 262.1V273.05445941018206M667.5 232.3184775969V243.66M677.5 262.27V273.6156770543527M682.5 227.94991722015695V243.36M704.5 223.41050337398823V243.0M713.5 227.8469702289359V243.0M719.5 229.09723928019625V243.0M720.5 229.9433609259051V243.0M730.5 223.987663023679V243.0M733.5 262.225V276.5295929501949M737.5 225.89293955647116V243.0M755.5 262.0416666666667V281.96821073563825M763.5 261.7V271.0276881308301M772.5 227.740493229558V244.2M887.5 223.89888040212466V242.5M888.5 263.0V278.2764015637067M891.5 228.49684344910753V242.5M892.5 263.0V274.6114990977332M894.5 263.0V276.9112884342612M903.5 225.64411949069853V242.5M914.5 263.0V279.9461489414252M941.5 227.84667879763555V242.9M944.5 262.4V272.104625477778M958.5 228.52488436982594V243.3181818181818M978.5 262.0V276.6761954880572M984.5 229.17575776548904V242.72727272727272M316.5 234.01177535299698V245.51162790697674M361.5 229.26704130007448V245.77325581395348M392.5 260.04651162790697V278.3334031941461M400.5 260.0V277.81876780287155M425.5 229.97416714631206V246.0M440.5 260.1666666666667V277.29341034546997M478.5 236.5294858741543V246.0M621.5 230.10933168541249V245.095M825.5 234.7200590301117V245.75M857.5 232.3461672329639V245.43333333333334" stroke="#222" stroke-width="1.1"/>
<path d="M282.5 220.9V280.7M283.5 219.6V281.1M284.5 224.6V276.0M285.5 223.3V277.6M286.5 226.5V282.7M287.5 228.1V280.7M288.5 228.2V275.2M289.5 225.2V273.4M290.5 227.8V273.5M291.5 222.6V272.6M292.5 225.7V272.7M293.5 228.8V271.2M294.5 225.1V273.5M295.5 226.7V272.5M296.5 225.9V276.0M297.5 222.3V277.7M298.5 224.2V276.5M299.5 225.8V280.7M300.5 224.8V277.8M301.5 227.7V276.2M302.5 227.7V273.1M303.5 228.6V268.5M304.5 231.8V267.2M305.5 230.4V270.0M306.5 235.8V269.1M307.5 236.4V269.2M308.5 234.2V265.5M309.5 239.3V267.7M310.5 239.3V271.8M311.5 238.5V273.0M312.5 237.8V269.7M313.5 238.2V265.9M314.5 238.4V266.8M315.5 239.7V266.7M316.5 239.9V270.3M317.5 238.4V267.2M318.5 239.4V266.4M319.5 238.1V267.5M320.5 239.4V271.7M321.5 239.6V265.9M322.5 239.9V266.2M323.5 237.5V268.0M324.5 237.5V265.9M325.5 238.7V266.5M326.5 235.2V264.9M327.5 239.6V265.5M328.5 238.2V265.5M329.5 239.8V267.5M330.5 239.4V265.0M331.5 239.5V265.0M332.5 240.8V268.7M333.5 240.8V265.2M334.5 241.5V265.7M335.5 241.1V266.3M336.5 240.2V266.6M337.5 240.4V266.8M338.5 240.5V268.0M339.5 238.1V269.1M340.5 239.4V268.1M341.5 237.7V268.9M342.5 239.0V267.1M343.5 238.2V269.9M344.5 236.1V267.0M345.5 237.9V267.5M346.5 240.1V268.6M347.5 238.4V265.8M348.5 238.5V268.2M349.5 237.4V267.5M350.5 239.6V270.7M351.5 238.4V268.5M352.5 238.2V265.4M353.5 236.9V266.6M354.5 238.1V267.3M355.5 239.0V270.2M356.5 240.2V266.5M357.5 241.5V265.4M358.5 240.9V266.1M359.5 241.4V265.3M360.5 240.7V265.5M361.5 242.5V265.2M362.5 241.2V264.4M363.5 241.0V266.2M364.5 240.8V265.6M365.5 241.2V265.1M366.5 240.1V266.7M367.5 239.6V267.5M368.5 239.9V267.0M369.5 240.5V267.8M370.5 240.1V267.7M371.5 240.2V267.7M372.5 236.7V267.9M373.5 239.9V268.4M374.5 236.6V268.6M375.5 239.7V268.0M376.5 241.0V270.6M377.5 235.7V267.6M378.5 241.4V270.8M379.5 240.2V268.3M380.5 241.0V266.3M381.5 240.3V265.5M382.5 240.5V266.4M383.5 241.1V266.4M384.5 240.1V266.0M385.5 239.6V265.4M386.5 242.4V265.3M387.5 241.1V266.6M388.5 236.5V264.3M389.5 238.7V264.4M390.5 239.7V264.1M391.5 239.4V264.4M392.5 240.8V265.2M393.5 238.1V263.8M394.5 240.5V264.8M395.5 239.2V264.8M396.5 239.3V265.5M397.5 241.2V265.1M398.5 240.7V265.8M399.5 240.8V266.9M400.5 237.3V267.5M401.5 240.8V266.8M402.5 241.9V265.6M403.5 241.7V266.7M404.5 241.0V265.7M405.5 240.5V265.3M406.5 241.3V265.0M407.5 241.3V265.6M408.5 240.8V266.1M409.5 241.3V266.6M410.5 238.1V265.3M411.5 241.2V264.6M412.5 241.4V265.0M413.5 240.6V264.9M414.5 240.5V268.3M415.5 241.6V265.2M416.5 240.4V267.8M417.5 240.3V266.9M418.5 241.5V267.4M419.5 240.3V266.9M420.5 240.0V268.2M421.5 238.7V266.3M422.5 239.4V266.3M423.5 240.0V265.8M424.5 239.5V266.6M425.5 237.1V266.9M426.5 240.4V265.7M427.5 239.6V266.9M428.5 240.6V267.0M429.5 241.6V264.4M430.5 241.2V266.7M431.5 240.8V266.5M432.5 241.4V265.0M433.5 237.5V266.8M434.5 238.1V266.2M435.5 239.3V267.2M436.5 238.2V267.8M437.5 239.4V269.6M438.5 237.7V267.6M439.5 239.7V266.8M440.5 240.0V266.6M441.5 241.4V266.9M442.5 240.2V265.7M443.5 240.9V264.2M444.5 240.7V267.0M445.5 240.8V266.1M446.5 239.3V270.5M447.5 239.4V268.0M448.5 239.6V265.1M449.5 238.3V266.3M450.5 237.2V265.4M451.5 239.4V265.9M452.5 239.3V266.7M453.5 236.5V266.0M454.5 239.5V267.5M455.5 239.6V267.4M456.5 240.1V271.6M457.5 238.8V266.6M458.5 240.9V267.6M459.5 240.9V269.0M460.5 240.0V265.7M461.5 241.4V268.1M462.5 241.9V269.5M463.5 241.7V267.9M464.5 242.5V266.2M465.5 241.2V268.5M466.5 241.6V265.6M467.5 237.2V266.7M468.5 239.5V267.7M469.5 241.0V266.4M470.5 240.7V266.8M471.5 239.8V266.7M472.5 239.8V266.6M473.5 239.1V267.9M474.5 238.5V267.4M475.5 238.4V266.2M476.5 238.2V265.4M477.5 236.6V267.5M478.5 239.8V266.8M479.5 239.1V269.1M480.5 240.1V266.3M481.5 238.7V267.4M482.5 241.1V269.7M483.5 240.7V265.4M484.5 240.2V265.6M485.5 240.1V266.6M486.5 239.4V265.6M487.5 241.3V269.3M488.5 240.5V265.8M489.5 240.9V266.3M490.5 240.3V266.9M491.5 240.4V265.8M492.5 240.5V265.6M493.5 240.1V272.0M494.5 239.5V268.5M495.5 242.3V267.9M496.5 240.3V265.5M497.5 241.2V266.3M498.5 240.6V267.5M499.5 243.0V267.6M500.5 239.7V267.1M501.5 241.3V266.5M502.5 242.0V267.3M503.5 241.1V266.2M504.5 239.8V267.3M505.5 240.9V265.8M506.5 240.1V264.8M507.5 239.4V264.8M508.5 238.9V265.7M509.5 239.1V265.9M510.5 238.8V265.3M511.5 237.6V268.0M512.5 235.5V266.2M513.5 239.3V266.7M514.5 235.4V267.5M515.5 240.0V265.6M516.5 236.6V267.2M517.5 241.0V266.3M518.5 242.3V265.8M519.5 242.6V265.9M520.5 241.7V267.2M521.5 238.3V266.5M522.5 239.9V266.5M523.5 237.4V268.2M524.5 235.9V269.2M525.5 231.8V269.9M526.5 229.9V269.9M527.5 234.4V267.9M528.5 233.1V268.1M529.5 233.9V267.2M530.5 234.6V268.7M531.5 235.8V269.0M532.5 237.5V268.3M533.5 237.5V272.6M534.5 236.3V269.4M535.5 236.8V270.0M536.5 238.5V268.7M537.5 238.4V269.0M538.5 238.3V267.8M539.5 238.9V267.6M540.5 238.7V266.4M541.5 239.3V266.4M542.5 238.1V265.5M543.5 235.1V269.0M544.5 240.1V265.6M545.5 241.7V268.0M546.5 240.0V267.0M547.5 238.8V267.7M548.5 240.0V271.7M549.5 238.9V268.7M550.5 239.6V267.4M551.5 239.8V266.9M552.5 237.2V268.2M553.5 238.0V266.6M554.5 237.3V268.9M555.5 238.0V265.5M556.5 237.7V265.9M557.5 235.3V265.3M558.5 237.1V266.7M559.5 236.9V266.1M560.5 236.8V269.0M561.5 237.6V267.2M562.5 237.9V266.5M563.5 237.2V266.6M564.5 235.6V270.0M565.5 237.6V270.9M566.5 236.8V267.0M567.5 237.3V265.7M568.5 239.3V269.0M569.5 238.2V266.4M570.5 238.8V268.7M571.5 240.1V266.5M572.5 241.7V264.9M573.5 240.7V267.4M574.5 242.4V266.5M575.5 240.1V265.6M576.5 236.9V266.6M577.5 241.3V266.3M578.5 240.3V272.6M579.5 238.8V267.1M580.5 240.2V266.0M581.5 239.0V264.9M582.5 238.8V265.6M583.5 241.4V266.1M584.5 240.0V265.8M585.5 238.1V266.4M586.5 241.1V265.9M587.5 239.3V266.5M588.5 241.1V270.4M589.5 242.0V268.1M590.5 238.7V267.6M591.5 240.6V268.1M592.5 239.4V271.4M593.5 240.8V268.5M594.5 239.4V273.0M595.5 234.0V267.6M596.5 238.6V267.6M597.5 239.0V267.1M598.5 238.5V268.3M599.5 238.8V267.4M600.5 238.3V265.3M601.5 238.5V263.7M602.5 237.8V269.2M603.5 239.7V266.4M604.5 239.3V268.5M605.5 240.1V267.0M606.5 240.1V266.9M607.5 239.9V270.3M608.5 241.2V270.6M609.5 239.5V268.6M610.5 239.9V269.8M611.5 235.0V267.9M612.5 241.3V266.3M613.5 240.0V267.7M614.5 240.3V268.6M615.5 239.4V266.8M616.5 240.2V265.9M617.5 240.4V266.6M618.5 239.6V265.5M619.5 238.9V265.4M620.5 240.0V264.1M621.5 240.0V265.5M622.5 239.9V269.1M623.5 237.2V265.1M624.5 239.3V265.1M625.5 238.9V264.2M626.5 239.4V265.9M627.5 233.6V266.5M628.5 239.7V265.5M629.5 239.6V265.9M630.5 241.1V265.1M631.5 239.1V265.9M632.5 241.3V265.5M633.5 239.0V266.5M634.5 239.3V271.1M635.5 238.6V266.9M636.5 240.0V267.8M637.5 237.8V268.7M638.5 236.9V268.4M639.5 238.7V268.5M640.5 237.3V267.9M641.5 239.8V268.8M642.5 240.3V268.0M643.5 238.7V271.0M644.5 239.3V267.0M645.5 239.4V269.3M646.5 239.1V267.3M647.5 238.4V268.0M648.5 238.3V270.2M649.5 236.7V270.2M650.5 237.6V271.3M651.5 236.9V269.7M652.5 238.0V269.9M653.5 238.1V270.5M654.5 238.3V268.2M655.5 237.4V269.3M656.5 233.9V268.1M657.5 237.8V266.9M658.5 238.1V267.5M659.5 237.5V267.7M660.5 238.0V268.3M661.5 238.2V267.5M662.5 237.2V271.5M663.5 237.6V268.3M664.5 232.9V268.8M665.5 236.4V269.1M666.5 236.4V269.2M667.5 235.3V269.2M668.5 234.1V275.2M669.5 235.6V271.2M670.5 236.0V270.0M671.5 234.5V270.1M672.5 235.8V269.4M673.5 236.3V269.1M674.5 238.1V270.3M675.5 237.7V273.9M676.5 237.8V269.3M677.5 239.0V268.9M678.5 239.5V269.0M679.5 240.4V268.2M680.5 234.1V268.9M681.5 239.6V268.9M682.5 239.2V270.9M683.5 239.8V268.5M684.5 238.6V269.8M685.5 238.1V269.1M686.5 238.6V269.5M687.5 238.8V270.3M688.5 237.5V269.5M689.5 237.7V269.6M690.5 236.7V268.7M691.5 240.1V272.4M692.5 240.4V268.7M693.5 238.4V267.3M694.5 238.9V267.2M695.5 240.9V269.1M696.5 240.5V268.7M697.5 239.6V268.2M698.5 239.3V273.4M699.5 238.5V268.5M700.5 237.9V267.6M701.5 238.5V267.1M702.5 237.2V267.0M703.5 235.0V267.9M704.5 237.0V267.0M705.5 238.7V267.5M706.5 237.3V267.0M707.5 233.8V267.8M708.5 235.9V267.8M709.5 239.6V267.8M710.5 238.8V269.0M711.5 236.2V268.3M712.5 237.5V270.3M713.5 236.7V273.2M714.5 236.8V271.2M715.5 236.7V268.1M716.5 235.3V268.1M717.5 235.8V268.6M718.5 235.0V271.5M719.5 235.7V267.8M720.5 235.2V267.1M721.5 235.2V268.3M722.5 236.4V268.9M723.5 235.7V267.9M724.5 237.5V266.9M725.5 237.7V269.0M726.5 237.4V269.4M727.5 237.4V267.0M728.5 237.8V265.1M729.5 237.6V264.8M730.5 236.9V265.4M731.5 238.8V265.3M732.5 236.6V266.2M733.5 236.1V267.0M734.5 236.5V267.1M735.5 235.9V266.5M736.5 236.7V268.2M737.5 233.9V273.0M738.5 234.0V270.0M739.5 234.5V269.7M740.5 235.5V270.3M741.5 233.7V271.0M742.5 235.7V270.3M743.5 236.7V270.0M744.5 237.4V271.1M745.5 237.7V269.9M746.5 237.8V268.4M747.5 238.3V267.1M748.5 237.2V267.5M749.5 236.3V267.6M750.5 235.4V267.1M751.5 235.0V267.7M752.5 235.7V267.3M753.5 235.3V267.7M754.5 234.1V268.7M755.5 235.5V267.6M756.5 235.7V270.9M757.5 236.5V268.4M758.5 234.0V269.6M759.5 235.8V270.8M760.5 236.6V269.2M761.5 237.2V268.5M762.5 235.7V269.3M763.5 238.3V272.0M764.5 235.5V269.5M765.5 235.6V266.9M766.5 236.8V266.8M767.5 237.2V266.8M768.5 234.2V266.2M769.5 235.5V265.2M770.5 237.3V265.0M771.5 235.3V264.9M772.5 236.3V265.1M773.5 236.3V265.4M774.5 237.7V264.9M775.5 238.0V265.4M776.5 237.1V266.3M777.5 238.5V267.4M778.5 238.6V268.5M779.5 237.4V268.1M780.5 238.7V268.4M781.5 238.9V267.4M782.5 237.3V268.5M783.5 238.8V266.5M784.5 238.5V266.6M785.5 237.3V267.0M786.5 237.6V267.2M787.5 237.2V267.9M788.5 238.4V266.3M789.5 238.0V269.0M790.5 238.3V264.4M791.5 238.7V266.0M792.5 238.8V265.0M793.5 241.0V264.9M794.5 240.6V264.7M795.5 239.8V265.7M796.5 238.6V266.1M797.5 240.6V264.9M798.5 239.3V265.2M799.5 239.2V265.4M800.5 237.9V265.9M801.5 240.3V263.7M802.5 239.7V264.2M803.5 240.9V265.5M804.5 237.6V265.1M805.5 242.3V268.1M806.5 242.2V264.6M807.5 241.9V265.1M808.5 241.3V265.3M809.5 240.8V266.6M810.5 240.2V265.4M811.5 240.6V270.4M812.5 240.4V271.0M813.5 240.2V266.3M814.5 239.9V266.4M815.5 240.7V264.9M816.5 241.8V266.7M817.5 240.1V265.8M818.5 241.0V267.1M819.5 240.6V266.0M820.5 240.0V265.9M821.5 239.9V264.0M822.5 241.2V267.6M823.5 241.8V265.3M824.5 241.1V265.1M825.5 240.0V264.0M826.5 242.5V263.0M827.5 241.4V264.2M828.5 243.0V264.6M829.5 241.6V264.5M830.5 240.6V269.9M831.5 239.7V264.2M832.5 239.8V265.3M833.5 240.2V265.6M834.5 240.8V265.1M835.5 240.1V265.6M836.5 240.9V265.9M837.5 239.4V266.0M838.5 241.1V264.6M839.5 241.3V264.7M840.5 240.6V267.9M841.5 242.0V265.0M842.5 240.9V263.4M843.5 241.8V264.3M844.5 242.3V264.5M845.5 241.2V266.4M846.5 236.8V265.3M847.5 241.2V264.9M848.5 240.0V266.8M849.5 241.2V270.3M850.5 241.8V267.3M851.5 239.9V264.8M852.5 239.1V268.0M853.5 237.1V265.2M854.5 236.1V265.8M855.5 235.0V271.2M856.5 238.8V265.2M857.5 238.0V266.9M858.5 233.5V266.3M859.5 238.5V265.2M860.5 239.0V264.9M861.5 236.0V265.2M862.5 237.3V265.0M863.5 237.3V265.2M864.5 238.8V263.8M865.5 239.4V265.7M866.5 238.7V265.9M867.5 238.2V265.8M868.5 238.6V267.1M869.5 238.5V265.4M870.5 240.7V267.2M871.5 239.0V268.4M872.5 239.4V268.6M873.5 239.8V268.7M874.5 238.5V269.6M875.5 236.3V269.2M876.5 236.9V269.2M877.5 238.0V270.5M878.5 234.5V270.0M879.5 238.6V268.9M880.5 237.5V268.1M881.5 238.2V269.0M882.5 239.2V270.8M883.5 237.7V268.5M884.5 235.1V269.4M885.5 237.9V270.3M886.5 236.3V270.2M887.5 236.7V269.1M888.5 236.8V267.6M889.5 236.0V267.5M890.5 237.4V266.9M891.5 237.7V269.0M892.5 235.8V267.2M893.5 236.1V268.8M894.5 235.2V270.1M895.5 235.6V269.1M896.5 234.8V268.8M897.5 234.5V269.1M898.5 234.6V267.2M899.5 235.6V268.9M900.5 235.5V268.7M901.5 237.3V267.0M902.5 237.7V267.2M903.5 237.3V266.7M904.5 236.7V268.2M905.5 237.4V267.8M906.5 236.4V267.0M907.5 234.9V266.3M908.5 237.3V268.5M909.5 236.8V271.6M910.5 236.5V271.6M911.5 236.4V269.2M912.5 238.9V270.8M913.5 238.0V272.3M914.5 237.2V268.3M915.5 236.5V268.6M916.5 238.7V267.9M917.5 238.4V267.8M918.5 238.4V270.4M919.5 237.4V267.5M920.5 238.0V271.9M921.5 237.4V267.5M922.5 234.4V267.3M923.5 236.8V267.7M924.5 237.1V269.7M925.5 232.3V268.7M926.5 236.3V267.0M927.5 235.4V267.8M928.5 236.5V269.3M929.5 237.9V269.4M930.5 236.6V268.8M931.5 235.0V269.4M932.5 238.1V268.7M933.5 236.3V271.1M934.5 236.7V271.4M935.5 235.8V270.6M936.5 235.1V269.4M937.5 235.6V270.7M938.5 237.9V272.0M939.5 235.7V267.7M940.5 236.5V268.9M941.5 238.9V267.8M942.5 234.5V264.9M943.5 238.3V266.2M944.5 238.8V266.9M945.5 238.5V269.2M946.5 237.9V269.1M947.5 237.3V267.7M948.5 236.5V269.5M949.5 236.7V271.1M950.5 236.1V270.0M951.5 232.9V270.9M952.5 234.7V270.9M953.5 235.9V269.7M954.5 237.3V271.6M955.5 237.2V268.8M956.5 232.7V268.0M957.5 235.3V268.9M958.5 238.6V268.4M959.5 238.3V268.7M960.5 238.6V268.3M961.5 237.7V269.3M962.5 238.3V272.9M963.5 238.3V268.9M964.5 238.2V270.0M965.5 237.6V270.1M966.5 237.1V270.5M967.5 237.8V269.5M968.5 237.0V268.4M969.5 238.1V270.2M970.5 237.0V270.9M971.5 236.2V269.9M972.5 235.8V267.9M973.5 234.8V269.4M974.5 235.3V268.2M975.5 235.6V269.4M976.5 235.9V267.1M977.5 235.8V272.6M978.5 235.9V269.4M979.5 237.2V268.5M980.5 237.5V269.2M981.5 236.0V267.7M982.5 236.4V267.6M983.5 235.8V267.1M984.5 235.7V266.1M985.5 237.5V265.9M986.5 235.4V272.7M987.5 236.2V267.4M988.5 236.5V267.5M989.5 237.3V272.7M990.5 237.8V267.7M991.5 238.1V267.6M992.5 237.9V268.1M993.5 236.9V268.6" stroke="#000" stroke-width="1.1"/>
<line x1="304.2" y1="217.5" x2="304.2" y2="277" stroke="#7c2a7c" stroke-width="1.7" stroke-opacity="0.7"/>
<circle cx="304.2" cy="217.3" r="2" fill="#7c2a7c"/>
<line x1="307.3" y1="217.5" x2="307.3" y2="277" stroke="#7c2a7c" stroke-width="1.7" stroke-opacity="0.7"/>
<circle cx="307.3" cy="217.3" r="2" fill="#7c2a7c"/>
<line x1="526.8" y1="217.5" x2="526.8" y2="277" stroke="#7c2a7c" stroke-width="1.7" stroke-opacity="0.7"/>
<circle cx="526.8" cy="217.3" r="2" fill="#7c2a7c"/>
<line x1="530.2" y1="217.5" x2="530.2" y2="277" stroke="#7c2a7c" stroke-width="1.7" stroke-opacity="0.7"/>
<circle cx="530.2" cy="217.3" r="2" fill="#7c2a7c"/>
<line x1="876.3" y1="217.5" x2="876.3" y2="277" stroke="#7c2a7c" stroke-width="1.7" stroke-opacity="0.7"/>
<circle cx="876.3" cy="217.3" r="2" fill="#7c2a7c"/>
<line x1="912.4" y1="217.5" x2="912.4" y2="277" stroke="#7c2a7c" stroke-width="1.7" stroke-opacity="0.7"/>
<circle cx="912.4" cy="217.3" r="2" fill="#7c2a7c"/>
<line x1="914.6" y1="217.5" x2="914.6" y2="277" stroke="#7c2a7c" stroke-width="1.7" stroke-opacity="0.7"/>
<circle cx="914.6" cy="217.3" r="2" fill="#7c2a7c"/>
<line x1="921.8" y1="217.5" x2="921.8" y2="277" stroke="#7c2a7c" stroke-width="1.7" stroke-opacity="0.7"/>
<circle cx="921.8" cy="217.3" r="2" fill="#7c2a7c"/>
<line x1="927.4" y1="217.5" x2="927.4" y2="277" stroke="#7c2a7c" stroke-width="1.7" stroke-opacity="0.7"/>
<circle cx="927.4" cy="217.3" r="2" fill="#7c2a7c"/>
<line x1="698.3" y1="217.5" x2="698.3" y2="273" stroke="#58b8c8" stroke-width="1.7" stroke-opacity="0.7"/>
<circle cx="698.3" cy="217.3" r="2" fill="#58b8c8"/>
<line x1="872.8" y1="217.5" x2="872.8" y2="273" stroke="#58b8c8" stroke-width="1.7" stroke-opacity="0.7"/>
<circle cx="872.8" cy="217.3" r="2" fill="#58b8c8"/>
<line x1="668.8" y1="217.5" x2="668.8" y2="280" stroke="#3040b0" stroke-width="1.7" stroke-opacity="0.7"/>
<circle cx="668.8" cy="217.3" r="2" fill="#3040b0"/>
<path d="M281.5 293.2 V198.5 H994.5 V293.2 H281.5" fill="none" stroke="#3a3a3a" stroke-width="1.5"/>
<path d="M284.5 293.2 v3.2 M287.5 293.2 v3.2 M291.5 293.2 v5 M294.5 293.2 v3.2 M297.5 293.2 v3.2 M301.5 293.2 v3.2 M304.5 293.2 v3.2 M307.5 293.2 v3.2 M311.5 293.2 v3.2 M314.5 293.2 v3.2 M317.5 293.2 v3.2 M321.5 293.2 v3.2 M324.5 293.2 v5 M327.5 293.2 v3.2 M331.5 293.2 v3.2 M334.5 293.2 v3.2 M337.5 293.2 v3.2 M341.5 293.2 v3.2 M344.5 293.2 v3.2 M348.5 293.2 v3.2 M351.5 293.2 v3.2 M354.5 293.2 v3.2 M358.5 293.2 v5 M361.5 293.2 v3.2 M364.5 293.2 v3.2 M368.5 293.2 v3.2 M371.5 293.2 v3.2 M374.5 293.2 v3.2 M378.5 293.2 v3.2 M381.5 293.2 v3.2 M384.5 293.2 v3.2 M388.5 293.2 v3.2 M391.5 293.2 v5 M394.5 293.2 v3.2 M398.5 293.2 v3.2 M401.5 293.2 v3.2 M405.5 293.2 v3.2 M408.5 293.2 v3.2 M411.5 293.2 v3.2 M415.5 293.2 v3.2 M418.5 293.2 v3.2 M421.5 293.2 v3.2 M425.5 293.2 v5 M428.5 293.2 v3.2 M431.5 293.2 v3.2 M435.5 293.2 v3.2 M438.5 293.2 v3.2 M441.5 293.2 v3.2 M445.5 293.2 v3.2 M448.5 293.2 v3.2 M451.5 293.2 v3.2 M455.5 293.2 v3.2 M458.5 293.2 v5 M462.5 293.2 v3.2 M465.5 293.2 v3.2 M468.5 293.2 v3.2 M472.5 293.2 v3.2 M475.5 293.2 v3.2 M478.5 293.2 v3.2 M482.5 293.2 v3.2 M485.5 293.2 v3.2 M488.5 293.2 v3.2 M492.5 293.2 v5 M495.5 293.2 v3.2 M498.5 293.2 v3.2 M502.5 293.2 v3.2 M505.5 293.2 v3.2 M508.5 293.2 v3.2 M512.5 293.2 v3.2 M515.5 293.2 v3.2 M519.5 293.2 v3.2 M522.5 293.2 v3.2 M525.5 293.2 v5 M529.5 293.2 v3.2 M532.5 293.2 v3.2 M535.5 293.2 v3.2 M539.5 293.2 v3.2 M542.5 293.2 v3.2 M545.5 293.2 v3.2 M549.5 293.2 v3.2 M552.5 293.2 v3.2 M555.5 293.2 v3.2 M559.5 293.2 v5 M562.5 293.2 v3.2 M565.5 293.2 v3.2 M569.5 293.2 v3.2 M572.5 293.2 v3.2 M575.5 293.2 v3.2 M579.5 293.2 v3.2 M582.5 293.2 v3.2 M586.5 293.2 v3.2 M589.5 293.2 v3.2 M592.5 293.2 v5 M596.5 293.2 v3.2 M599.5 293.2 v3.2 M602.5 293.2 v3.2 M606.5 293.2 v3.2 M609.5 293.2 v3.2 M612.5 293.2 v3.2 M616.5 293.2 v3.2 M619.5 293.2 v3.2 M622.5 293.2 v3.2 M626.5 293.2 v5 M629.5 293.2 v3.2 M632.5 293.2 v3.2 M636.5 293.2 v3.2 M639.5 293.2 v3.2 M643.5 293.2 v3.2 M646.5 293.2 v3.2 M649.5 293.2 v3.2 M653.5 293.2 v3.2 M656.5 293.2 v3.2 M659.5 293.2 v5 M663.5 293.2 v3.2 M666.5 293.2 v3.2 M669.5 293.2 v3.2 M673.5 293.2 v3.2 M676.5 293.2 v3.2 M679.5 293.2 v3.2 M683.5 293.2 v3.2 M686.5 293.2 v3.2 M689.5 293.2 v3.2 M693.5 293.2 v5 M696.5 293.2 v3.2 M700.5 293.2 v3.2 M703.5 293.2 v3.2 M706.5 293.2 v3.2 M710.5 293.2 v3.2 M713.5 293.2 v3.2 M716.5 293.2 v3.2 M720.5 293.2 v3.2 M723.5 293.2 v3.2 M726.5 293.2 v5 M730.5 293.2 v3.2 M733.5 293.2 v3.2 M736.5 293.2 v3.2 M740.5 293.2 v3.2 M743.5 293.2 v3.2 M746.5 293.2 v3.2 M750.5 293.2 v3.2 M753.5 293.2 v3.2 M757.5 293.2 v3.2 M760.5 293.2 v5 M763.5 293.2 v3.2 M767.5 293.2 v3.2 M770.5 293.2 v3.2 M773.5 293.2 v3.2 M777.5 293.2 v3.2 M780.5 293.2 v3.2 M783.5 293.2 v3.2 M787.5 293.2 v3.2 M790.5 293.2 v3.2 M793.5 293.2 v5 M797.5 293.2 v3.2 M800.5 293.2 v3.2 M803.5 293.2 v3.2 M807.5 293.2 v3.2 M810.5 293.2 v3.2 M813.5 293.2 v3.2 M817.5 293.2 v3.2 M820.5 293.2 v3.2 M824.5 293.2 v3.2 M827.5 293.2 v5 M830.5 293.2 v3.2 M834.5 293.2 v3.2 M837.5 293.2 v3.2 M840.5 293.2 v3.2 M844.5 293.2 v3.2 M847.5 293.2 v3.2 M850.5 293.2 v3.2 M854.5 293.2 v3.2 M857.5 293.2 v3.2 M860.5 293.2 v5 M864.5 293.2 v3.2 M867.5 293.2 v3.2 M870.5 293.2 v3.2 M874.5 293.2 v3.2 M877.5 293.2 v3.2 M881.5 293.2 v3.2 M884.5 293.2 v3.2 M887.5 293.2 v3.2 M891.5 293.2 v3.2 M894.5 293.2 v5 M897.5 293.2 v3.2 M901.5 293.2 v3.2 M904.5 293.2 v3.2 M907.5 293.2 v3.2 M911.5 293.2 v3.2 M914.5 293.2 v3.2 M917.5 293.2 v3.2 M921.5 293.2 v3.2 M924.5 293.2 v3.2 M927.5 293.2 v5 M931.5 293.2 v3.2 M934.5 293.2 v3.2 M938.5 293.2 v3.2 M941.5 293.2 v3.2 M944.5 293.2 v3.2 M948.5 293.2 v3.2 M951.5 293.2 v3.2 M954.5 293.2 v3.2 M958.5 293.2 v3.2 M961.5 293.2 v5 M964.5 293.2 v3.2 M968.5 293.2 v3.2 M971.5 293.2 v3.2 M974.5 293.2 v3.2 M978.5 293.2 v3.2 M981.5 293.2 v3.2 M984.5 293.2 v3.2 M988.5 293.2 v3.2 M991.5 293.2 v3.2" stroke="#202020" stroke-width="1"/>
<text x="291.35633802816903" y="307.70" font-size="10" font-weight="normal" fill="#111" text-anchor="middle" textLength="22" lengthAdjust="spacingAndGlyphs" >23:00</text>
<text x="324.8774647887324" y="307.70" font-size="10" font-weight="normal" fill="#111" text-anchor="middle" textLength="22" lengthAdjust="spacingAndGlyphs" >23:20</text>
<text x="358.39859154929576" y="307.70" font-size="10" font-weight="normal" fill="#111" text-anchor="middle" textLength="22" lengthAdjust="spacingAndGlyphs" >23:40</text>
<text x="391.91971830985915" y="307.70" font-size="10" font-weight="normal" fill="#111" text-anchor="middle" textLength="22" lengthAdjust="spacingAndGlyphs" >00:00</text>
<text x="425.44084507042254" y="307.70" font-size="10" font-weight="normal" fill="#111" text-anchor="middle" textLength="22" lengthAdjust="spacingAndGlyphs" >00:20</text>
<text x="458.96197183098593" y="307.70" font-size="10" font-weight="normal" fill="#111" text-anchor="middle" textLength="22" lengthAdjust="spacingAndGlyphs" >00:40</text>
<text x="492.4830985915493" y="307.70" font-size="10" font-weight="normal" fill="#111" text-anchor="middle" textLength="22" lengthAdjust="spacingAndGlyphs" >01:00</text>
<text x="526.0042253521126" y="307.70" font-size="10" font-weight="normal" fill="#111" text-anchor="middle" textLength="22" lengthAdjust="spacingAndGlyphs" >01:20</text>
<text x="559.525352112676" y="307.70" font-size="10" font-weight="normal" fill="#111" text-anchor="middle" textLength="22" lengthAdjust="spacingAndGlyphs" >01:40</text>
<text x="593.0464788732394" y="307.70" font-size="10" font-weight="normal" fill="#111" text-anchor="middle" textLength="22" lengthAdjust="spacingAndGlyphs" >02:00</text>
<text x="626.5676056338027" y="307.70" font-size="10" font-weight="normal" fill="#111" text-anchor="middle" textLength="22" lengthAdjust="spacingAndGlyphs" >02:20</text>
<text x="660.0887323943662" y="307.70" font-size="10" font-weight="normal" fill="#111" text-anchor="middle" textLength="22" lengthAdjust="spacingAndGlyphs" >02:40</text>
<text x="693.6098591549296" y="307.70" font-size="10" font-weight="normal" fill="#111" text-anchor="middle" textLength="22" lengthAdjust="spacingAndGlyphs" >03:00</text>
<text x="727.1309859154928" y="307.70" font-size="10" font-weight="normal" fill="#111" text-anchor="middle" textLength="22" lengthAdjust="spacingAndGlyphs" >03:20</text>
<text x="760.6521126760563" y="307.70" font-size="10" font-weight="normal" fill="#111" text-anchor="middle" textLength="22" lengthAdjust="spacingAndGlyphs" >03:40</text>
<text x="794.1732394366197" y="307.70" font-size="10" font-weight="normal" fill="#111" text-anchor="middle" textLength="22" lengthAdjust="spacingAndGlyphs" >04:00</text>
<text x="827.6943661971831" y="307.70" font-size="10" font-weight="normal" fill="#111" text-anchor="middle" textLength="22" lengthAdjust="spacingAndGlyphs" >04:20</text>
<text x="861.2154929577464" y="307.70" font-size="10" font-weight="normal" fill="#111" text-anchor="middle" textLength="22" lengthAdjust="spacingAndGlyphs" >04:40</text>
<text x="894.7366197183098" y="307.70" font-size="10" font-weight="normal" fill="#111" text-anchor="middle" textLength="22" lengthAdjust="spacingAndGlyphs" >05:00</text>
<text x="928.2577464788732" y="307.70" font-size="10" font-weight="normal" fill="#111" text-anchor="middle" textLength="22" lengthAdjust="spacingAndGlyphs" >05:20</text>
<text x="961.7788732394366" y="307.70" font-size="10" font-weight="normal" fill="#111" text-anchor="middle" textLength="22" lengthAdjust="spacingAndGlyphs" >05:40</text>
<rect x="218" y="311.1" width="788" height="2" fill="#7a7a7a" />
<text x="994.5" y="325.92" font-size="9.5" font-weight="normal" fill="#111" text-anchor="end" letter-spacing="-0.2" >AHI/Hr</text>
<line x1="281.5" y1="334.5" x2="994.5" y2="334.5" stroke="#e6e6e6" stroke-width="1" />
<line x1="281.5" y1="338.5" x2="994.5" y2="338.5" stroke="#e6e6e6" stroke-width="1" />
<line x1="281.5" y1="343.5" x2="994.5" y2="343.5" stroke="#e6e6e6" stroke-width="1" />
<line x1="281.5" y1="348.5" x2="994.5" y2="348.5" stroke="#c4c4c4" stroke-width="1" />
<line x1="281.5" y1="353.5" x2="994.5" y2="353.5" stroke="#e6e6e6" stroke-width="1" />
<line x1="281.5" y1="358.5" x2="994.5" y2="358.5" stroke="#e6e6e6" stroke-width="1" />
<line x1="281.5" y1="362.5" x2="994.5" y2="362.5" stroke="#e6e6e6" stroke-width="1" />
<line x1="281.5" y1="367.5" x2="994.5" y2="367.5" stroke="#c4c4c4" stroke-width="1" />
<line x1="281.5" y1="372.5" x2="994.5" y2="372.5" stroke="#e6e6e6" stroke-width="1" />
<line x1="281.5" y1="376.5" x2="994.5" y2="376.5" stroke="#e6e6e6" stroke-width="1" />
<line x1="281.5" y1="381.5" x2="994.5" y2="381.5" stroke="#e6e6e6" stroke-width="1" />
<line x1="281.5" y1="386.5" x2="994.5" y2="386.5" stroke="#c4c4c4" stroke-width="1" />
<line x1="281.5" y1="391.5" x2="994.5" y2="391.5" stroke="#e6e6e6" stroke-width="1" />
<line x1="281.5" y1="396.5" x2="994.5" y2="396.5" stroke="#e6e6e6" stroke-width="1" />
<line x1="281.5" y1="400.5" x2="994.5" y2="400.5" stroke="#e6e6e6" stroke-width="1" />
<line x1="281.5" y1="405.5" x2="994.5" y2="405.5" stroke="#c4c4c4" stroke-width="1" />
<line x1="281.5" y1="410.5" x2="994.5" y2="410.5" stroke="#e6e6e6" stroke-width="1" />
<line x1="281.5" y1="414.5" x2="994.5" y2="414.5" stroke="#e6e6e6" stroke-width="1" />
<line x1="281.5" y1="419.5" x2="994.5" y2="419.5" stroke="#e6e6e6" stroke-width="1" />
<path d="M278.0 329.5 H281.5 M279.5 334.5 H281.5 M279.5 338.5 H281.5 M279.5 343.5 H281.5 M278.0 348.5 H281.5 M279.5 353.5 H281.5 M279.5 358.5 H281.5 M279.5 362.5 H281.5 M278.0 367.5 H281.5 M279.5 372.5 H281.5 M279.5 376.5 H281.5 M279.5 381.5 H281.5 M278.0 386.5 H281.5 M279.5 391.5 H281.5 M279.5 396.5 H281.5 M279.5 400.5 H281.5 M278.0 405.5 H281.5 M279.5 410.5 H281.5 M279.5 414.5 H281.5 M279.5 419.5 H281.5 M278.0 424.5 H281.5" stroke="#333" stroke-width="1"/>
<text x="278.2" y="332.60" font-size="10" font-weight="normal" fill="#161616" text-anchor="end" letter-spacing="-0.15" >10.0</text>
<text x="278.2" y="351.60" font-size="10" font-weight="normal" fill="#161616" text-anchor="end" letter-spacing="-0.15" >8.0</text>
<text x="278.2" y="370.60" font-size="10" font-weight="normal" fill="#161616" text-anchor="end" letter-spacing="-0.15" >6.0</text>
<text x="278.2" y="389.60" font-size="10" font-weight="normal" fill="#161616" text-anchor="end" letter-spacing="-0.15" >4.0</text>
<text x="278.2" y="408.60" font-size="10" font-weight="normal" fill="#161616" text-anchor="end" letter-spacing="-0.15" >2.0</text>
<text x="278.2" y="427.60" font-size="10" font-weight="normal" fill="#161616" text-anchor="end" letter-spacing="-0.15" >0.0</text>
<text x="231.5" y="378.7" font-size="10.5" font-weight="bold" fill="#111" text-anchor="middle" transform="rotate(-90 231.5 378.7)" dy="3.8">AHI</text>
<polyline points="282,424.0 304.5,424.0 310,386.0 405,386.0 410,424.0 527,424.0 532.5,405.0 627,405.0 632,424.0 668.5,424.0 670.5,414.5 697.5,414.5 700,405.0 768.5,405.0 771,414.5 797.5,414.5 800,424.0 872.6,424.0 876,412.6 878.6,405.0 913.4,405.0 916.7,376.5 922,376.5 923.5,367.0 928.8,367.0 930.6,358.0 972.6,358.0 978.5,376.5 994,376.5" fill="none" stroke="#98d898" stroke-width="1.25" stroke-linejoin="round"/>
<path d="M281.5 424 V329 H994.5 V424 H281.5" fill="none" stroke="#3a3a3a" stroke-width="1.5"/>
<path d="M284.5 424 v3.2 M287.5 424 v3.2 M291.5 424 v5 M294.5 424 v3.2 M297.5 424 v3.2 M301.5 424 v3.2 M304.5 424 v3.2 M307.5 424 v3.2 M311.5 424 v3.2 M314.5 424 v3.2 M317.5 424 v3.2 M321.5 424 v3.2 M324.5 424 v5 M327.5 424 v3.2 M331.5 424 v3.2 M334.5 424 v3.2 M337.5 424 v3.2 M341.5 424 v3.2 M344.5 424 v3.2 M348.5 424 v3.2 M351.5 424 v3.2 M354.5 424 v3.2 M358.5 424 v5 M361.5 424 v3.2 M364.5 424 v3.2 M368.5 424 v3.2 M371.5 424 v3.2 M374.5 424 v3.2 M378.5 424 v3.2 M381.5 424 v3.2 M384.5 424 v3.2 M388.5 424 v3.2 M391.5 424 v5 M394.5 424 v3.2 M398.5 424 v3.2 M401.5 424 v3.2 M405.5 424 v3.2 M408.5 424 v3.2 M411.5 424 v3.2 M415.5 424 v3.2 M418.5 424 v3.2 M421.5 424 v3.2 M425.5 424 v5 M428.5 424 v3.2 M431.5 424 v3.2 M435.5 424 v3.2 M438.5 424 v3.2 M441.5 424 v3.2 M445.5 424 v3.2 M448.5 424 v3.2 M451.5 424 v3.2 M455.5 424 v3.2 M458.5 424 v5 M462.5 424 v3.2 M465.5 424 v3.2 M468.5 424 v3.2 M472.5 424 v3.2 M475.5 424 v3.2 M478.5 424 v3.2 M482.5 424 v3.2 M485.5 424 v3.2 M488.5 424 v3.2 M492.5 424 v5 M495.5 424 v3.2 M498.5 424 v3.2 M502.5 424 v3.2 M505.5 424 v3.2 M508.5 424 v3.2 M512.5 424 v3.2 M515.5 424 v3.2 M519.5 424 v3.2 M522.5 424 v3.2 M525.5 424 v5 M529.5 424 v3.2 M532.5 424 v3.2 M535.5 424 v3.2 M539.5 424 v3.2 M542.5 424 v3.2 M545.5 424 v3.2 M549.5 424 v3.2 M552.5 424 v3.2 M555.5 424 v3.2 M559.5 424 v5 M562.5 424 v3.2 M565.5 424 v3.2 M569.5 424 v3.2 M572.5 424 v3.2 M575.5 424 v3.2 M579.5 424 v3.2 M582.5 424 v3.2 M586.5 424 v3.2 M589.5 424 v3.2 M592.5 424 v5 M596.5 424 v3.2 M599.5 424 v3.2 M602.5 424 v3.2 M606.5 424 v3.2 M609.5 424 v3.2 M612.5 424 v3.2 M616.5 424 v3.2 M619.5 424 v3.2 M622.5 424 v3.2 M626.5 424 v5 M629.5 424 v3.2 M632.5 424 v3.2 M636.5 424 v3.2 M639.5 424 v3.2 M643.5 424 v3.2 M646.5 424 v3.2 M649.5 424 v3.2 M653.5 424 v3.2 M656.5 424 v3.2 M659.5 424 v5 M663.5 424 v3.2 M666.5 424 v3.2 M669.5 424 v3.2 M673.5 424 v3.2 M676.5 424 v3.2 M679.5 424 v3.2 M683.5 424 v3.2 M686.5 424 v3.2 M689.5 424 v3.2 M693.5 424 v5 M696.5 424 v3.2 M700.5 424 v3.2 M703.5 424 v3.2 M706.5 424 v3.2 M710.5 424 v3.2 M713.5 424 v3.2 M716.5 424 v3.2 M720.5 424 v3.2 M723.5 424 v3.2 M726.5 424 v5 M730.5 424 v3.2 M733.5 424 v3.2 M736.5 424 v3.2 M740.5 424 v3.2 M743.5 424 v3.2 M746.5 424 v3.2 M750.5 424 v3.2 M753.5 424 v3.2 M757.5 424 v3.2 M760.5 424 v5 M763.5 424 v3.2 M767.5 424 v3.2 M770.5 424 v3.2 M773.5 424 v3.2 M777.5 424 v3.2 M780.5 424 v3.2 M783.5 424 v3.2 M787.5 424 v3.2 M790.5 424 v3.2 M793.5 424 v5 M797.5 424 v3.2 M800.5 424 v3.2 M803.5 424 v3.2 M807.5 424 v3.2 M810.5 424 v3.2 M813.5 424 v3.2 M817.5 424 v3.2 M820.5 424 v3.2 M824.5 424 v3.2 M827.5 424 v5 M830.5 424 v3.2 M834.5 424 v3.2 M837.5 424 v3.2 M840.5 424 v3.2 M844.5 424 v3.2 M847.5 424 v3.2 M850.5 424 v3.2 M854.5 424 v3.2 M857.5 424 v3.2 M860.5 424 v5 M864.5 424 v3.2 M867.5 424 v3.2 M870.5 424 v3.2 M874.5 424 v3.2 M877.5 424 v3.2 M881.5 424 v3.2 M884.5 424 v3.2 M887.5 424 v3.2 M891.5 424 v3.2 M894.5 424 v5 M897.5 424 v3.2 M901.5 424 v3.2 M904.5 424 v3.2 M907.5 424 v3.2 M911.5 424 v3.2 M914.5 424 v3.2 M917.5 424 v3.2 M921.5 424 v3.2 M924.5 424 v3.2 M927.5 424 v5 M931.5 424 v3.2 M934.5 424 v3.2 M938.5 424 v3.2 M941.5 424 v3.2 M944.5 424 v3.2 M948.5 424 v3.2 M951.5 424 v3.2 M954.5 424 v3.2 M958.5 424 v3.2 M961.5 424 v5 M964.5 424 v3.2 M968.5 424 v3.2 M971.5 424 v3.2 M974.5 424 v3.2 M978.5 424 v3.2 M981.5 424 v3.2 M984.5 424 v3.2 M988.5 424 v3.2 M991.5 424 v3.2" stroke="#202020" stroke-width="1"/>
<text x="291.35633802816903" y="438.60" font-size="10" font-weight="normal" fill="#111" text-anchor="middle" textLength="22" lengthAdjust="spacingAndGlyphs" >23:00</text>
<text x="324.8774647887324" y="438.60" font-size="10" font-weight="normal" fill="#111" text-anchor="middle" textLength="22" lengthAdjust="spacingAndGlyphs" >23:20</text>
<text x="358.39859154929576" y="438.60" font-size="10" font-weight="normal" fill="#111" text-anchor="middle" textLength="22" lengthAdjust="spacingAndGlyphs" >23:40</text>
<text x="391.91971830985915" y="438.60" font-size="10" font-weight="normal" fill="#111" text-anchor="middle" textLength="22" lengthAdjust="spacingAndGlyphs" >00:00</text>
<text x="425.44084507042254" y="438.60" font-size="10" font-weight="normal" fill="#111" text-anchor="middle" textLength="22" lengthAdjust="spacingAndGlyphs" >00:20</text>
<text x="458.96197183098593" y="438.60" font-size="10" font-weight="normal" fill="#111" text-anchor="middle" textLength="22" lengthAdjust="spacingAndGlyphs" >00:40</text>
<text x="492.4830985915493" y="438.60" font-size="10" font-weight="normal" fill="#111" text-anchor="middle" textLength="22" lengthAdjust="spacingAndGlyphs" >01:00</text>
<text x="526.0042253521126" y="438.60" font-size="10" font-weight="normal" fill="#111" text-anchor="middle" textLength="22" lengthAdjust="spacingAndGlyphs" >01:20</text>
<text x="559.525352112676" y="438.60" font-size="10" font-weight="normal" fill="#111" text-anchor="middle" textLength="22" lengthAdjust="spacingAndGlyphs" >01:40</text>
<text x="593.0464788732394" y="438.60" font-size="10" font-weight="normal" fill="#111" text-anchor="middle" textLength="22" lengthAdjust="spacingAndGlyphs" >02:00</text>
<text x="626.5676056338027" y="438.60" font-size="10" font-weight="normal" fill="#111" text-anchor="middle" textLength="22" lengthAdjust="spacingAndGlyphs" >02:20</text>
<text x="660.0887323943662" y="438.60" font-size="10" font-weight="normal" fill="#111" text-anchor="middle" textLength="22" lengthAdjust="spacingAndGlyphs" >02:40</text>
<text x="693.6098591549296" y="438.60" font-size="10" font-weight="normal" fill="#111" text-anchor="middle" textLength="22" lengthAdjust="spacingAndGlyphs" >03:00</text>
<text x="727.1309859154928" y="438.60" font-size="10" font-weight="normal" fill="#111" text-anchor="middle" textLength="22" lengthAdjust="spacingAndGlyphs" >03:20</text>
<text x="760.6521126760563" y="438.60" font-size="10" font-weight="normal" fill="#111" text-anchor="middle" textLength="22" lengthAdjust="spacingAndGlyphs" >03:40</text>
<text x="794.1732394366197" y="438.60" font-size="10" font-weight="normal" fill="#111" text-anchor="middle" textLength="22" lengthAdjust="spacingAndGlyphs" >04:00</text>
<text x="827.6943661971831" y="438.60" font-size="10" font-weight="normal" fill="#111" text-anchor="middle" textLength="22" lengthAdjust="spacingAndGlyphs" >04:20</text>
<text x="861.2154929577464" y="438.60" font-size="10" font-weight="normal" fill="#111" text-anchor="middle" textLength="22" lengthAdjust="spacingAndGlyphs" >04:40</text>
<text x="894.7366197183098" y="438.60" font-size="10" font-weight="normal" fill="#111" text-anchor="middle" textLength="22" lengthAdjust="spacingAndGlyphs" >05:00</text>
<text x="928.2577464788732" y="438.60" font-size="10" font-weight="normal" fill="#111" text-anchor="middle" textLength="22" lengthAdjust="spacingAndGlyphs" >05:20</text>
<text x="961.7788732394366" y="438.60" font-size="10" font-weight="normal" fill="#111" text-anchor="middle" textLength="22" lengthAdjust="spacingAndGlyphs" >05:40</text>
<rect x="218" y="442.1" width="788" height="2" fill="#7a7a7a" />
<text x="958.5" y="457.62" font-size="9.5" font-weight="normal" fill="#111" text-anchor="start" textLength="36.5" lengthAdjust="spacingAndGlyphs" >Pressure</text>
<rect x="955.5" y="456" width="2" height="2" fill="#222" />
<text x="926.3" y="457.62" font-size="9.5" font-weight="normal" fill="#111" text-anchor="start" textLength="24" lengthAdjust="spacingAndGlyphs" >EPAP</text>
<rect x="923" y="456" width="2" height="2" fill="#222" />
<line x1="281.5" y1="467.5" x2="994.5" y2="467.5" stroke="#e6e6e6" stroke-width="1" />
<line x1="281.5" y1="474.5" x2="994.5" y2="474.5" stroke="#e6e6e6" stroke-width="1" />
<line x1="281.5" y1="480.5" x2="994.5" y2="480.5" stroke="#e6e6e6" stroke-width="1" />
<line x1="281.5" y1="487.5" x2="994.5" y2="487.5" stroke="#c4c4c4" stroke-width="1" />
<line x1="281.5" y1="494.5" x2="994.5" y2="494.5" stroke="#e6e6e6" stroke-width="1" />
<line x1="281.5" y1="501.5" x2="994.5" y2="501.5" stroke="#e6e6e6" stroke-width="1" />
<line x1="281.5" y1="507.5" x2="994.5" y2="507.5" stroke="#e6e6e6" stroke-width="1" />
<line x1="281.5" y1="514.5" x2="994.5" y2="514.5" stroke="#c4c4c4" stroke-width="1" />
<line x1="281.5" y1="521.5" x2="994.5" y2="521.5" stroke="#e6e6e6" stroke-width="1" />
<line x1="281.5" y1="528.5" x2="994.5" y2="528.5" stroke="#e6e6e6" stroke-width="1" />
<line x1="281.5" y1="535.5" x2="994.5" y2="535.5" stroke="#e6e6e6" stroke-width="1" />
<line x1="281.5" y1="541.5" x2="994.5" y2="541.5" stroke="#c4c4c4" stroke-width="1" />
<line x1="281.5" y1="548.5" x2="994.5" y2="548.5" stroke="#e6e6e6" stroke-width="1" />
<line x1="281.5" y1="555.5" x2="994.5" y2="555.5" stroke="#e6e6e6" stroke-width="1" />
<line x1="281.5" y1="562.5" x2="994.5" y2="562.5" stroke="#e6e6e6" stroke-width="1" />
<line x1="281.5" y1="568.5" x2="994.5" y2="568.5" stroke="#c4c4c4" stroke-width="1" />
<line x1="281.5" y1="575.5" x2="994.5" y2="575.5" stroke="#e6e6e6" stroke-width="1" />
<path d="M278.0 460.5 H281.5 M279.5 467.5 H281.5 M279.5 474.5 H281.5 M279.5 480.5 H281.5 M278.0 487.5 H281.5 M279.5 494.5 H281.5 M279.5 501.5 H281.5 M279.5 507.5 H281.5 M278.0 514.5 H281.5 M279.5 521.5 H281.5 M279.5 528.5 H281.5 M279.5 535.5 H281.5 M278.0 541.5 H281.5 M279.5 548.5 H281.5 M279.5 555.5 H281.5 M279.5 562.5 H281.5 M278.0 568.5 H281.5 M279.5 575.5 H281.5" stroke="#333" stroke-width="1"/>
<text x="278.2" y="463.60" font-size="10" font-weight="normal" fill="#161616" text-anchor="end" letter-spacing="-0.15" >15.0</text>
<text x="278.2" y="490.70" font-size="10" font-weight="normal" fill="#161616" text-anchor="end" letter-spacing="-0.15" >13.0</text>
<text x="278.2" y="517.80" font-size="10" font-weight="normal" fill="#161616" text-anchor="end" letter-spacing="-0.15" >11.0</text>
<text x="278.2" y="544.90" font-size="10" font-weight="normal" fill="#161616" text-anchor="end" letter-spacing="-0.15" >9.0</text>
<text x="278.2" y="572.00" font-size="10" font-weight="normal" fill="#161616" text-anchor="end" letter-spacing="-0.15" >7.0</text>
<text x="231.5" y="530" font-size="10.5" font-weight="bold" fill="#111" text-anchor="middle" transform="rotate(-90 231.5 530)" dy="3.8">Pressure</text>
<polyline points="284,549.6 293.3,549.6 294.8,546.8 313,547.6 346,549.2 443,549.6 491.6,548.6 500.6,546.5 509.6,544.3 520,546 568,549.4 636.7,549.4 664,548 669.5,544.7 681.8,546.6 683.8,542.5 695.5,543.4 699.6,528 701.8,527 712,531 724,534.8 733.8,537.6 735.7,532.2 748,536.2 760,539.3 780,542.3 800,544.6 827,546.8 834.8,545 850,546.8 868.3,548.3 874.8,538 895,541.2 920,543.8 950,545.8 994,548.3" fill="none" stroke="#1f6a2a" stroke-width="1.6"/>
<polyline points="698,578 698.3,567.5 702,567 733.8,577.5 735.7,572.6 754,578" fill="none" stroke="#2233aa" stroke-width="1.6"/>
<path d="M281.5 578 V460 H994.5 V578" fill="none" stroke="#3a3a3a" stroke-width="1.5"/>
<rect x="217" y="577.5" width="789" height="17" fill="#f1efe6" />
<rect x="217" y="577.5" width="789" height="1" fill="#e4e2d8" />
<text x="225" y="590.72" font-size="9.5" font-weight="normal" fill="#111" text-anchor="start" letter-spacing="-0.2" >100%</text>
<text x="261" y="590.72" font-size="9.5" font-weight="normal" fill="#111" text-anchor="start" letter-spacing="-0.2" >Reset</text>
<path d="M905 584 L915 584 L910 589.5 Z" fill="#000"/>
<rect x="920.5" y="579.5" width="95" height="15" fill="#ffffff" stroke="#a4a4a4" stroke-width="1"/>
<rect x="923" y="586" width="7" height="2.8" fill="#111" />
<rect x="930" y="586" width="5.5" height="2.8" fill="#5a8a3a" />
<text x="937" y="591.28" font-size="10.5" font-weight="normal" fill="#111" text-anchor="start" textLength="46.7" lengthAdjust="spacingAndGlyphs" >Event Flags</text>
<rect x="1004" y="580.5" width="11" height="13" rx="1" fill="#c4d5fb"/>
<path d="M1006.5 585.5 L1009.5 588.5 L1012.5 585.5" fill="none" stroke="#4d6185" stroke-width="1.6"/>
<rect x="963.5" y="600.5" width="60" height="16.5" rx="1.5" fill="#ece9d8" stroke="#d4d0c0" stroke-width="1"/>
<text x="966.5" y="612.98" font-size="10.5" font-weight="normal" fill="#111" text-anchor="start" textLength="53.5" lengthAdjust="spacingAndGlyphs" >07:06:04:000</text>
<rect x="0" y="618.5" width="1024" height="2.5" fill="#4a72d4" />
<rect x="0" y="618.5" width="66" height="2.5" fill="#4a8a4a" />
<rect x="894" y="618.5" width="130" height="2.5" fill="#2a8ee0" />
<line x1="1018.5" y1="52" x2="1018.5" y2="595" stroke="#aeaca0" stroke-width="1" />
</svg></body></html>
